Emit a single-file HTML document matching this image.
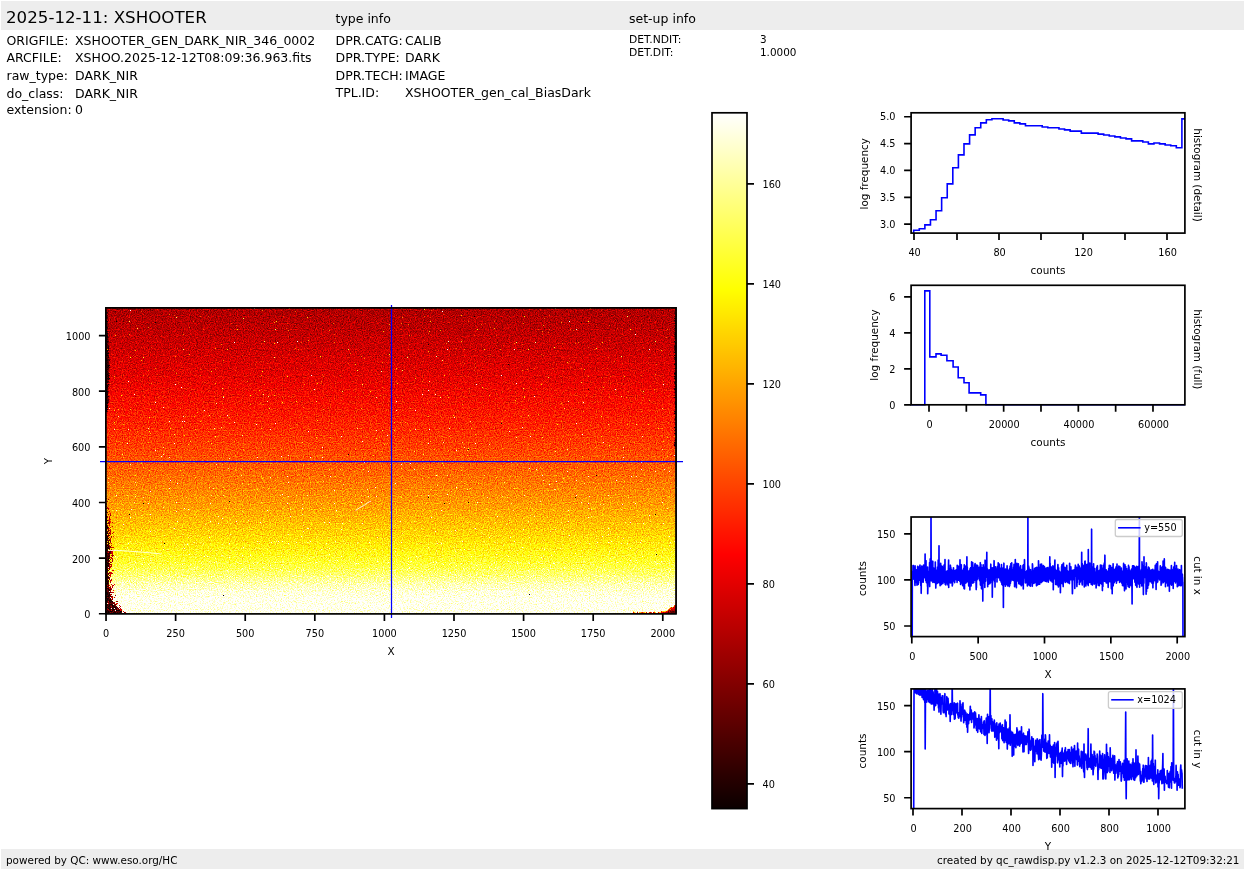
<!DOCTYPE html>
<html><head><meta charset="utf-8"><title>qc_rawdisp</title>
<style>html,body{margin:0;padding:0;background:#fff}svg{display:block;will-change:transform}</style></head>
<body>
<svg width="1245" height="870" viewBox="0 0 1245 870" font-family='"DejaVu Sans","Liberation Sans",sans-serif' fill="#000">
<defs>
<linearGradient id="gv" x1="0" y1="0" x2="0" y2="1"><stop offset="0.000" stop-color="rgb(62,62,62)"/><stop offset="0.025" stop-color="rgb(65,65,65)"/><stop offset="0.050" stop-color="rgb(67,67,67)"/><stop offset="0.075" stop-color="rgb(69,69,69)"/><stop offset="0.100" stop-color="rgb(72,72,72)"/><stop offset="0.125" stop-color="rgb(74,74,74)"/><stop offset="0.150" stop-color="rgb(77,77,77)"/><stop offset="0.175" stop-color="rgb(80,80,80)"/><stop offset="0.200" stop-color="rgb(82,82,82)"/><stop offset="0.225" stop-color="rgb(85,85,85)"/><stop offset="0.250" stop-color="rgb(88,88,88)"/><stop offset="0.275" stop-color="rgb(92,92,92)"/><stop offset="0.300" stop-color="rgb(95,95,95)"/><stop offset="0.325" stop-color="rgb(98,98,98)"/><stop offset="0.350" stop-color="rgb(102,102,102)"/><stop offset="0.375" stop-color="rgb(105,105,105)"/><stop offset="0.400" stop-color="rgb(109,109,109)"/><stop offset="0.425" stop-color="rgb(113,113,113)"/><stop offset="0.450" stop-color="rgb(117,117,117)"/><stop offset="0.475" stop-color="rgb(121,121,121)"/><stop offset="0.500" stop-color="rgb(126,126,126)"/><stop offset="0.525" stop-color="rgb(130,130,130)"/><stop offset="0.550" stop-color="rgb(135,135,135)"/><stop offset="0.575" stop-color="rgb(140,140,140)"/><stop offset="0.600" stop-color="rgb(145,145,145)"/><stop offset="0.625" stop-color="rgb(150,150,150)"/><stop offset="0.650" stop-color="rgb(155,155,155)"/><stop offset="0.675" stop-color="rgb(161,161,161)"/><stop offset="0.700" stop-color="rgb(167,167,167)"/><stop offset="0.725" stop-color="rgb(173,173,173)"/><stop offset="0.750" stop-color="rgb(179,179,179)"/><stop offset="0.775" stop-color="rgb(186,186,186)"/><stop offset="0.800" stop-color="rgb(193,193,193)"/><stop offset="0.825" stop-color="rgb(201,201,201)"/><stop offset="0.850" stop-color="rgb(210,210,210)"/><stop offset="0.875" stop-color="rgb(222,222,222)"/><stop offset="0.900" stop-color="rgb(236,236,236)"/><stop offset="0.925" stop-color="rgb(247,247,247)"/><stop offset="0.950" stop-color="rgb(254,254,254)"/><stop offset="0.975" stop-color="rgb(255,255,255)"/><stop offset="1.000" stop-color="rgb(255,255,255)"/></linearGradient>
<linearGradient id="cb" x1="0" y1="0" x2="0" y2="1"><stop offset="0.0000" stop-color="rgb(255,255,255)"/><stop offset="0.0159" stop-color="rgb(255,255,239)"/><stop offset="0.0317" stop-color="rgb(255,255,223)"/><stop offset="0.0476" stop-color="rgb(255,255,207)"/><stop offset="0.0635" stop-color="rgb(255,255,191)"/><stop offset="0.0794" stop-color="rgb(255,255,175)"/><stop offset="0.0952" stop-color="rgb(255,255,159)"/><stop offset="0.1111" stop-color="rgb(255,255,143)"/><stop offset="0.1270" stop-color="rgb(255,255,127)"/><stop offset="0.1429" stop-color="rgb(255,255,112)"/><stop offset="0.1587" stop-color="rgb(255,255,96)"/><stop offset="0.1746" stop-color="rgb(255,255,80)"/><stop offset="0.1905" stop-color="rgb(255,255,64)"/><stop offset="0.2063" stop-color="rgb(255,255,48)"/><stop offset="0.2222" stop-color="rgb(255,255,32)"/><stop offset="0.2381" stop-color="rgb(255,255,16)"/><stop offset="0.2540" stop-color="rgb(255,255,0)"/><stop offset="0.2698" stop-color="rgb(255,244,0)"/><stop offset="0.2857" stop-color="rgb(255,234,0)"/><stop offset="0.3016" stop-color="rgb(255,223,0)"/><stop offset="0.3175" stop-color="rgb(255,212,0)"/><stop offset="0.3333" stop-color="rgb(255,202,0)"/><stop offset="0.3492" stop-color="rgb(255,191,0)"/><stop offset="0.3651" stop-color="rgb(255,181,0)"/><stop offset="0.3810" stop-color="rgb(255,170,0)"/><stop offset="0.3968" stop-color="rgb(255,159,0)"/><stop offset="0.4127" stop-color="rgb(255,149,0)"/><stop offset="0.4286" stop-color="rgb(255,138,0)"/><stop offset="0.4444" stop-color="rgb(255,128,0)"/><stop offset="0.4603" stop-color="rgb(255,117,0)"/><stop offset="0.4762" stop-color="rgb(255,106,0)"/><stop offset="0.4921" stop-color="rgb(255,96,0)"/><stop offset="0.5079" stop-color="rgb(255,85,0)"/><stop offset="0.5238" stop-color="rgb(255,74,0)"/><stop offset="0.5397" stop-color="rgb(255,64,0)"/><stop offset="0.5556" stop-color="rgb(255,53,0)"/><stop offset="0.5714" stop-color="rgb(255,43,0)"/><stop offset="0.5873" stop-color="rgb(255,32,0)"/><stop offset="0.6032" stop-color="rgb(255,21,0)"/><stop offset="0.6190" stop-color="rgb(255,11,0)"/><stop offset="0.6349" stop-color="rgb(255,0,0)"/><stop offset="0.6508" stop-color="rgb(244,0,0)"/><stop offset="0.6667" stop-color="rgb(234,0,0)"/><stop offset="0.6825" stop-color="rgb(223,0,0)"/><stop offset="0.6984" stop-color="rgb(212,0,0)"/><stop offset="0.7143" stop-color="rgb(202,0,0)"/><stop offset="0.7302" stop-color="rgb(191,0,0)"/><stop offset="0.7460" stop-color="rgb(181,0,0)"/><stop offset="0.7619" stop-color="rgb(170,0,0)"/><stop offset="0.7778" stop-color="rgb(159,0,0)"/><stop offset="0.7937" stop-color="rgb(149,0,0)"/><stop offset="0.8095" stop-color="rgb(138,0,0)"/><stop offset="0.8254" stop-color="rgb(127,0,0)"/><stop offset="0.8413" stop-color="rgb(117,0,0)"/><stop offset="0.8571" stop-color="rgb(106,0,0)"/><stop offset="0.8730" stop-color="rgb(96,0,0)"/><stop offset="0.8889" stop-color="rgb(85,0,0)"/><stop offset="0.9048" stop-color="rgb(74,0,0)"/><stop offset="0.9206" stop-color="rgb(64,0,0)"/><stop offset="0.9365" stop-color="rgb(53,0,0)"/><stop offset="0.9524" stop-color="rgb(42,0,0)"/><stop offset="0.9683" stop-color="rgb(32,0,0)"/><stop offset="0.9841" stop-color="rgb(21,0,0)"/><stop offset="1.0000" stop-color="rgb(11,0,0)"/></linearGradient>
<filter id="hm" x="0" y="0" width="1" height="1" filterUnits="objectBoundingBox" color-interpolation-filters="sRGB">
<feTurbulence type="fractalNoise" baseFrequency="0.85" numOctaves="2" seed="5" result="n"/>
<feComponentTransfer in="n" result="t"><feFuncR type="linear" slope="0.42" intercept="0"/><feFuncG type="table" tableValues="0 0 0 0 0 0 0 0 0 0 0 0 0 0 0 0 0 0 0 0.05 0.25 0.6 1 1 1 1"/><feFuncB type="discrete" tableValues="1 1 1 1 1 1 1 1 1 1 1 1 1 1 1 1 1 1 1 1 1 1 0 0 0"/><feFuncA type="linear" slope="0" intercept="1"/></feComponentTransfer>
<feColorMatrix in="t" type="matrix" values="1 1 0 0 0  1 1 0 0 0  1 1 0 0 0  0 0 0 0 1" result="pos"/>
<feColorMatrix in="t" type="matrix" values="0 0 1 0 0  0 0 1 0 0  0 0 1 0 0  0 0 0 0 1" result="msk"/>
<feComposite in="SourceGraphic" in2="pos" operator="arithmetic" k1="0" k2="1" k3="1" k4="-0.21" result="v1"/>
<feComposite in="v1" in2="msk" operator="arithmetic" k1="1" k2="0" k3="0" k4="0" result="v"/>
<feComponentTransfer in="v"><feFuncR type="table" tableValues="0.0416 0.0833 0.1249 0.1666 0.2083 0.2499 0.2916 0.3333 0.3750 0.4166 0.4583 0.5000 0.5416 0.5833 0.6250 0.6666 0.7083 0.7500 0.7917 0.8333 0.8750 0.9167 0.9583 1.0000 1.0000 1.0000 1.0000 1.0000 1.0000 1.0000 1.0000 1.0000 1.0000 1.0000 1.0000 1.0000 1.0000 1.0000 1.0000 1.0000 1.0000 1.0000 1.0000 1.0000 1.0000 1.0000 1.0000 1.0000 1.0000 1.0000 1.0000 1.0000 1.0000 1.0000 1.0000 1.0000 1.0000 1.0000 1.0000 1.0000 1.0000 1.0000 1.0000 1.0000"/><feFuncG type="table" tableValues="0.0000 0.0000 0.0000 0.0000 0.0000 0.0000 0.0000 0.0000 0.0000 0.0000 0.0000 0.0000 0.0000 0.0000 0.0000 0.0000 0.0000 0.0000 0.0000 0.0000 0.0000 0.0000 0.0000 0.0000 0.0417 0.0833 0.1250 0.1667 0.2083 0.2500 0.2917 0.3333 0.3750 0.4167 0.4583 0.5000 0.5417 0.5833 0.6250 0.6667 0.7083 0.7500 0.7917 0.8333 0.8750 0.9167 0.9583 1.0000 1.0000 1.0000 1.0000 1.0000 1.0000 1.0000 1.0000 1.0000 1.0000 1.0000 1.0000 1.0000 1.0000 1.0000 1.0000 1.0000"/><feFuncB type="table" tableValues="0.0000 0.0000 0.0000 0.0000 0.0000 0.0000 0.0000 0.0000 0.0000 0.0000 0.0000 0.0000 0.0000 0.0000 0.0000 0.0000 0.0000 0.0000 0.0000 0.0000 0.0000 0.0000 0.0000 0.0000 0.0000 0.0000 0.0000 0.0000 0.0000 0.0000 0.0000 0.0000 0.0000 0.0000 0.0000 0.0000 0.0000 0.0000 0.0000 0.0000 0.0000 0.0000 0.0000 0.0000 0.0000 0.0000 0.0000 0.0000 0.0625 0.1250 0.1875 0.2500 0.3125 0.3750 0.4375 0.5000 0.5625 0.6250 0.6875 0.7500 0.8125 0.8750 0.9375 1.0000"/></feComponentTransfer>
</filter>
</defs>
<rect width="1245" height="870" fill="#fff"/>
<rect x="1" y="1" width="1243" height="29" fill="#ededed"/>
<rect x="1" y="849" width="1243" height="20" fill="#ededed"/>
<text x="6.0" y="22.6" font-size="16.67" text-anchor="start">2025-12-11: XSHOOTER</text>
<text x="335.5" y="22.8" font-size="12.5" text-anchor="start">type info</text>
<text x="629" y="22.8" font-size="12.5" text-anchor="start">set-up info</text>
<text x="6.5" y="44.8" font-size="12.5" text-anchor="start">ORIGFILE:</text>
<text x="75" y="44.8" font-size="12.5" text-anchor="start">XSHOOTER_GEN_DARK_NIR_346_0002</text>
<text x="6.5" y="61.5" font-size="12.5" text-anchor="start">ARCFILE:</text>
<text x="75" y="61.5" font-size="12.5" text-anchor="start">XSHOO.2025-12-12T08:09:36.963.fits</text>
<text x="6.5" y="79.9" font-size="12.5" text-anchor="start">raw_type:</text>
<text x="75" y="79.9" font-size="12.5" text-anchor="start">DARK_NIR</text>
<text x="6.5" y="97.5" font-size="12.5" text-anchor="start">do_class:</text>
<text x="75" y="97.5" font-size="12.5" text-anchor="start">DARK_NIR</text>
<text x="6.5" y="113.5" font-size="12.5" text-anchor="start">extension:</text>
<text x="75" y="113.5" font-size="12.5" text-anchor="start">0</text>
<text x="335.5" y="44.8" font-size="12.5" text-anchor="start">DPR.CATG:</text>
<text x="405" y="44.8" font-size="12.5" text-anchor="start">CALIB</text>
<text x="335.5" y="61.6" font-size="12.5" text-anchor="start">DPR.TYPE:</text>
<text x="405" y="61.6" font-size="12.5" text-anchor="start">DARK</text>
<text x="335.5" y="79.5" font-size="12.5" text-anchor="start">DPR.TECH:</text>
<text x="405" y="79.5" font-size="12.5" text-anchor="start">IMAGE</text>
<text x="335.5" y="96.8" font-size="12.5" text-anchor="start">TPL.ID:</text>
<text x="405" y="96.8" font-size="12.5" text-anchor="start">XSHOOTER_gen_cal_BiasDark</text>
<text x="629" y="42.8" font-size="10.42" text-anchor="start" textLength="52.3" lengthAdjust="spacingAndGlyphs">DET.NDIT:</text>
<text x="760" y="42.8" font-size="10.42" text-anchor="start">3</text>
<text x="629" y="55.9" font-size="10.42" text-anchor="start" textLength="44.4" lengthAdjust="spacingAndGlyphs">DET.DIT:</text>
<text x="760" y="55.9" font-size="10.42" text-anchor="start">1.0000</text>
<text x="6" y="864" font-size="10.42" text-anchor="start">powered by QC: www.eso.org/HC</text>
<text x="1239.5" y="864" font-size="10.42" text-anchor="end">created by qc_rawdisp.py v1.2.3 on 2025-12-12T09:32:21</text>
<clipPath id="ci"><rect x="105.9" y="307.9" width="570.1" height="306.0"/></clipPath>
<g filter="url(#hm)"><rect x="105.9" y="307.9" width="570.1" height="306.0" fill="url(#gv)"/><g clip-path="url(#ci)"><path d="M106 516h1v1h-1zM106 517h1v1h-1zM106 518h1v1h-1zM106 519h1v1h-1zM106 520h1v1h-1zM106 521h1v1h-1zM106 523h1v1h-1zM106 524h1v1h-1zM106 526h1v1h-1zM107 526h1v1h-1zM106 527h1v1h-1zM107 527h1v1h-1zM106 528h1v1h-1zM107 528h1v1h-1zM106 529h1v1h-1zM106 530h1v1h-1zM107 531h1v1h-1zM107 532h1v1h-1zM106 533h1v1h-1zM107 533h1v1h-1zM106 534h1v1h-1zM106 535h1v1h-1zM106 536h1v1h-1zM107 536h1v1h-1zM106 537h1v1h-1zM107 537h1v1h-1zM106 538h1v1h-1zM107 538h1v1h-1zM108 538h1v1h-1zM106 539h1v1h-1zM107 539h1v1h-1zM106 540h1v1h-1zM107 540h1v1h-1zM106 541h1v1h-1zM108 541h1v1h-1zM106 542h1v1h-1zM108 542h1v1h-1zM108 543h1v1h-1zM108 544h1v1h-1zM106 545h1v1h-1zM107 545h1v1h-1zM108 545h1v1h-1zM106 546h1v1h-1zM108 546h1v1h-1zM106 547h1v1h-1zM107 547h1v1h-1zM108 547h1v1h-1zM106 548h1v1h-1zM107 548h1v1h-1zM108 548h1v1h-1zM106 549h1v1h-1zM107 549h1v1h-1zM106 550h1v1h-1zM107 550h1v1h-1zM107 551h1v1h-1zM109 551h1v1h-1zM106 552h1v1h-1zM109 552h1v1h-1zM106 553h1v1h-1zM107 553h1v1h-1zM108 553h1v1h-1zM109 553h1v1h-1zM106 554h1v1h-1zM108 554h1v1h-1zM106 555h1v1h-1zM107 555h1v1h-1zM108 555h1v1h-1zM109 555h1v1h-1zM106 556h1v1h-1zM107 556h1v1h-1zM108 556h1v1h-1zM109 556h1v1h-1zM107 557h1v1h-1zM108 557h1v1h-1zM109 557h1v1h-1zM106 558h1v1h-1zM107 558h1v1h-1zM108 558h1v1h-1zM109 558h1v1h-1zM107 559h1v1h-1zM108 559h1v1h-1zM106 560h1v1h-1zM107 560h1v1h-1zM108 560h1v1h-1zM106 561h1v1h-1zM107 561h1v1h-1zM108 561h1v1h-1zM106 562h1v1h-1zM107 562h1v1h-1zM106 563h1v1h-1zM107 563h1v1h-1zM108 563h1v1h-1zM106 564h1v1h-1zM107 564h1v1h-1zM108 564h1v1h-1zM106 565h1v1h-1zM107 565h1v1h-1zM108 565h1v1h-1zM106 566h1v1h-1zM107 566h1v1h-1zM108 566h1v1h-1zM106 567h1v1h-1zM106 568h1v1h-1zM107 568h1v1h-1zM108 568h1v1h-1zM106 569h1v1h-1zM107 569h1v1h-1zM106 570h1v1h-1zM107 570h1v1h-1zM106 571h1v1h-1zM107 571h1v1h-1zM106 572h1v1h-1zM108 573h1v1h-1zM106 574h1v1h-1zM107 574h1v1h-1zM108 574h1v1h-1zM106 575h1v1h-1zM107 575h1v1h-1zM106 576h1v1h-1zM107 576h1v1h-1zM106 577h1v1h-1zM107 577h1v1h-1zM108 577h1v1h-1zM106 578h1v1h-1zM107 578h1v1h-1zM106 579h1v1h-1zM107 579h1v1h-1zM106 580h1v1h-1zM107 580h1v1h-1zM108 580h1v1h-1zM106 581h1v1h-1zM107 581h1v1h-1zM108 581h1v1h-1zM107 582h1v1h-1zM108 582h1v1h-1zM106 583h1v1h-1zM107 583h1v1h-1zM108 583h1v1h-1zM106 584h1v1h-1zM107 584h1v1h-1zM108 584h1v1h-1zM106 585h1v1h-1zM108 585h1v1h-1zM106 586h1v1h-1zM107 586h1v1h-1zM106 587h1v1h-1zM108 587h1v1h-1zM106 588h1v1h-1zM107 588h1v1h-1zM108 588h1v1h-1zM108 589h1v1h-1zM109 589h1v1h-1zM107 590h1v1h-1zM108 590h1v1h-1zM109 590h1v1h-1zM108 591h1v1h-1zM106 592h1v1h-1zM107 592h1v1h-1zM108 592h1v1h-1zM109 592h1v1h-1zM106 593h1v1h-1zM107 593h1v1h-1zM108 593h1v1h-1zM109 593h1v1h-1zM106 594h1v1h-1zM107 594h1v1h-1zM108 594h1v1h-1zM109 594h1v1h-1zM106 595h1v1h-1zM107 595h1v1h-1zM108 595h1v1h-1zM109 595h1v1h-1zM106 596h1v1h-1zM107 596h1v1h-1zM108 596h1v1h-1zM109 596h1v1h-1zM110 596h1v1h-1zM106 597h1v1h-1zM108 597h1v1h-1zM109 597h1v1h-1zM106 598h1v1h-1zM107 598h1v1h-1zM108 598h1v1h-1zM110 598h1v1h-1zM107 599h1v1h-1zM108 599h1v1h-1zM109 599h1v1h-1zM110 599h1v1h-1zM106 600h1v1h-1zM107 600h1v1h-1zM108 600h1v1h-1zM109 600h1v1h-1zM110 600h1v1h-1zM111 600h1v1h-1zM106 601h1v1h-1zM107 601h1v1h-1zM109 601h1v1h-1zM110 601h1v1h-1zM111 601h1v1h-1zM112 601h1v1h-1zM106 602h1v1h-1zM107 602h1v1h-1zM108 602h1v1h-1zM110 602h1v1h-1zM112 602h1v1h-1zM109 603h1v1h-1zM111 603h1v1h-1zM113 603h1v1h-1zM106 604h1v1h-1zM107 604h1v1h-1zM108 604h1v1h-1zM109 604h1v1h-1zM110 604h1v1h-1zM111 604h1v1h-1zM112 604h1v1h-1zM106 605h1v1h-1zM107 605h1v1h-1zM108 605h1v1h-1zM109 605h1v1h-1zM110 605h1v1h-1zM112 605h1v1h-1zM113 605h1v1h-1zM114 605h1v1h-1zM106 606h1v1h-1zM107 606h1v1h-1zM108 606h1v1h-1zM109 606h1v1h-1zM112 606h1v1h-1zM113 606h1v1h-1zM114 606h1v1h-1zM115 606h1v1h-1zM106 607h1v1h-1zM107 607h1v1h-1zM108 607h1v1h-1zM109 607h1v1h-1zM110 607h1v1h-1zM112 607h1v1h-1zM113 607h1v1h-1zM114 607h1v1h-1zM115 607h1v1h-1zM116 607h1v1h-1zM106 608h1v1h-1zM107 608h1v1h-1zM108 608h1v1h-1zM109 608h1v1h-1zM112 608h1v1h-1zM115 608h1v1h-1zM116 608h1v1h-1zM106 609h1v1h-1zM109 609h1v1h-1zM110 609h1v1h-1zM111 609h1v1h-1zM112 609h1v1h-1zM113 609h1v1h-1zM114 609h1v1h-1zM116 609h1v1h-1zM118 609h1v1h-1zM107 610h1v1h-1zM108 610h1v1h-1zM109 610h1v1h-1zM110 610h1v1h-1zM112 610h1v1h-1zM113 610h1v1h-1zM114 610h1v1h-1zM116 610h1v1h-1zM117 610h1v1h-1zM118 610h1v1h-1zM119 610h1v1h-1zM106 611h1v1h-1zM107 611h1v1h-1zM108 611h1v1h-1zM109 611h1v1h-1zM110 611h1v1h-1zM111 611h1v1h-1zM112 611h1v1h-1zM114 611h1v1h-1zM115 611h1v1h-1zM116 611h1v1h-1zM117 611h1v1h-1zM118 611h1v1h-1zM119 611h1v1h-1zM120 611h1v1h-1zM121 611h1v1h-1zM106 612h1v1h-1zM107 612h1v1h-1zM108 612h1v1h-1zM109 612h1v1h-1zM111 612h1v1h-1zM113 612h1v1h-1zM114 612h1v1h-1zM115 612h1v1h-1zM117 612h1v1h-1zM118 612h1v1h-1zM119 612h1v1h-1zM120 612h1v1h-1zM121 612h1v1h-1zM106 613h1v1h-1zM107 613h1v1h-1zM108 613h1v1h-1zM110 613h1v1h-1zM111 613h1v1h-1zM112 613h1v1h-1zM113 613h1v1h-1zM114 613h1v1h-1zM115 613h1v1h-1zM116 613h1v1h-1zM117 613h1v1h-1zM118 613h1v1h-1zM120 613h1v1h-1zM121 613h1v1h-1zM122 613h1v1h-1zM123 613h1v1h-1z" fill="rgb(13,13,13)"/><path d="M106 506h1v1h-1zM106 508h1v1h-1zM106 511h1v1h-1zM106 512h1v1h-1zM107 512h1v1h-1zM106 515h1v1h-1zM107 520h1v1h-1zM106 522h1v1h-1zM108 522h1v1h-1zM107 523h1v1h-1zM108 523h1v1h-1zM106 525h1v1h-1zM107 525h1v1h-1zM108 527h1v1h-1zM108 530h1v1h-1zM106 531h1v1h-1zM108 531h1v1h-1zM106 532h1v1h-1zM108 533h1v1h-1zM109 533h1v1h-1zM108 534h1v1h-1zM108 535h1v1h-1zM109 535h1v1h-1zM108 536h1v1h-1zM109 537h1v1h-1zM109 539h1v1h-1zM108 540h1v1h-1zM109 540h1v1h-1zM107 542h1v1h-1zM109 543h1v1h-1zM107 544h1v1h-1zM107 546h1v1h-1zM109 546h1v1h-1zM110 546h1v1h-1zM109 547h1v1h-1zM110 547h1v1h-1zM109 548h1v1h-1zM109 549h1v1h-1zM108 551h1v1h-1zM110 551h1v1h-1zM107 552h1v1h-1zM110 552h1v1h-1zM110 553h1v1h-1zM107 554h1v1h-1zM109 554h1v1h-1zM106 557h1v1h-1zM106 559h1v1h-1zM110 559h1v1h-1zM109 560h1v1h-1zM109 561h1v1h-1zM108 562h1v1h-1zM110 562h1v1h-1zM109 563h1v1h-1zM109 564h1v1h-1zM110 564h1v1h-1zM109 566h1v1h-1zM107 567h1v1h-1zM109 567h1v1h-1zM109 568h1v1h-1zM109 569h1v1h-1zM108 570h1v1h-1zM107 572h1v1h-1zM109 572h1v1h-1zM106 573h1v1h-1zM107 573h1v1h-1zM109 575h1v1h-1zM108 576h1v1h-1zM108 578h1v1h-1zM109 578h1v1h-1zM109 579h1v1h-1zM108 586h1v1h-1zM109 587h1v1h-1zM110 587h1v1h-1zM106 589h1v1h-1zM107 589h1v1h-1zM110 589h1v1h-1zM106 590h1v1h-1zM110 590h1v1h-1zM106 591h1v1h-1zM107 591h1v1h-1zM110 592h1v1h-1zM111 592h1v1h-1zM110 594h1v1h-1zM111 594h1v1h-1zM111 596h1v1h-1zM107 597h1v1h-1zM109 598h1v1h-1zM112 598h1v1h-1zM112 599h1v1h-1zM109 602h1v1h-1zM111 602h1v1h-1zM114 602h1v1h-1zM106 603h1v1h-1zM110 603h1v1h-1zM112 603h1v1h-1zM114 603h1v1h-1zM115 604h1v1h-1zM111 605h1v1h-1zM115 605h1v1h-1zM110 606h1v1h-1zM116 606h1v1h-1zM117 607h1v1h-1zM110 608h1v1h-1zM113 608h1v1h-1zM117 608h1v1h-1zM118 608h1v1h-1zM107 609h1v1h-1zM117 609h1v1h-1zM119 609h1v1h-1zM106 610h1v1h-1zM113 611h1v1h-1zM110 612h1v1h-1zM112 612h1v1h-1zM116 612h1v1h-1zM124 612h1v1h-1zM119 613h1v1h-1z" fill="rgb(42,42,42)"/><path d="M106 498h1v1h-1zM108 499h1v1h-1zM107 501h1v1h-1zM106 503h1v1h-1zM106 504h1v1h-1zM107 507h1v1h-1zM107 508h1v1h-1zM108 508h1v1h-1zM108 509h1v1h-1zM109 511h1v1h-1zM110 513h1v1h-1zM106 514h1v1h-1zM108 514h1v1h-1zM110 514h1v1h-1zM110 515h1v1h-1zM107 516h1v1h-1zM109 516h1v1h-1zM107 517h1v1h-1zM109 517h1v1h-1zM109 518h1v1h-1zM109 519h1v1h-1zM110 519h1v1h-1zM108 520h1v1h-1zM109 520h1v1h-1zM109 521h1v1h-1zM110 521h1v1h-1zM109 522h1v1h-1zM110 522h1v1h-1zM112 522h1v1h-1zM109 523h1v1h-1zM109 524h1v1h-1zM109 525h1v1h-1zM112 526h1v1h-1zM110 527h1v1h-1zM108 528h1v1h-1zM109 528h1v1h-1zM108 529h1v1h-1zM110 529h1v1h-1zM109 530h1v1h-1zM110 530h1v1h-1zM110 531h1v1h-1zM109 532h1v1h-1zM110 532h1v1h-1zM113 532h1v1h-1zM110 533h1v1h-1zM112 533h1v1h-1zM110 534h1v1h-1zM107 535h1v1h-1zM111 536h1v1h-1zM113 536h1v1h-1zM111 537h1v1h-1zM110 538h1v1h-1zM110 539h1v1h-1zM110 540h1v1h-1zM110 541h1v1h-1zM110 542h1v1h-1zM106 543h1v1h-1zM111 543h1v1h-1zM106 544h1v1h-1zM109 545h1v1h-1zM111 545h1v1h-1zM111 547h1v1h-1zM112 547h1v1h-1zM113 547h1v1h-1zM111 549h1v1h-1zM110 550h1v1h-1zM113 550h1v1h-1zM106 551h1v1h-1zM111 551h1v1h-1zM112 551h1v1h-1zM108 552h1v1h-1zM111 552h1v1h-1zM112 552h1v1h-1zM111 553h1v1h-1zM112 553h1v1h-1zM112 554h1v1h-1zM111 555h1v1h-1zM112 555h1v1h-1zM113 555h1v1h-1zM112 556h1v1h-1zM110 557h1v1h-1zM111 557h1v1h-1zM111 558h1v1h-1zM112 558h1v1h-1zM112 559h1v1h-1zM112 560h1v1h-1zM110 561h1v1h-1zM112 561h1v1h-1zM111 562h1v1h-1zM111 564h1v1h-1zM109 565h1v1h-1zM111 565h1v1h-1zM110 566h1v1h-1zM111 566h1v1h-1zM110 567h1v1h-1zM112 570h1v1h-1zM113 570h1v1h-1zM110 572h1v1h-1zM111 572h1v1h-1zM109 573h1v1h-1zM110 573h1v1h-1zM111 573h1v1h-1zM112 573h1v1h-1zM110 574h1v1h-1zM110 575h1v1h-1zM110 576h1v1h-1zM109 577h1v1h-1zM111 579h1v1h-1zM110 580h1v1h-1zM111 580h1v1h-1zM110 581h1v1h-1zM106 582h1v1h-1zM110 582h1v1h-1zM111 584h1v1h-1zM114 584h1v1h-1zM107 585h1v1h-1zM109 585h1v1h-1zM112 585h1v1h-1zM113 585h1v1h-1zM110 586h1v1h-1zM112 586h1v1h-1zM107 587h1v1h-1zM112 587h1v1h-1zM109 588h1v1h-1zM110 588h1v1h-1zM111 588h1v1h-1zM111 589h1v1h-1zM113 590h1v1h-1zM110 591h1v1h-1zM112 592h1v1h-1zM113 592h1v1h-1zM110 595h1v1h-1zM115 595h1v1h-1zM112 596h1v1h-1zM111 597h1v1h-1zM112 597h1v1h-1zM114 597h1v1h-1zM106 599h1v1h-1zM111 599h1v1h-1zM108 601h1v1h-1zM116 601h1v1h-1zM117 601h1v1h-1zM113 602h1v1h-1zM108 603h1v1h-1zM116 603h1v1h-1zM117 603h1v1h-1zM114 604h1v1h-1zM116 604h1v1h-1zM119 605h1v1h-1zM111 606h1v1h-1zM120 606h1v1h-1zM111 607h1v1h-1zM119 607h1v1h-1zM120 608h1v1h-1zM108 609h1v1h-1zM115 609h1v1h-1zM120 609h1v1h-1zM121 609h1v1h-1zM111 610h1v1h-1zM120 610h1v1h-1zM121 610h1v1h-1zM123 611h1v1h-1zM125 612h1v1h-1zM109 613h1v1h-1zM125 613h1v1h-1zM126 613h1v1h-1z" fill="rgb(73,73,73)"/><path d="M105.9 312h2.1v1h-2.1zM105.9 313h1.6v1h-1.6zM105.9 315h2.2v1h-2.2zM105.9 316h1.7v1h-1.7zM105.9 317h2.0v1h-2.0zM105.9 318h1.5v1h-1.5zM105.9 320h1.3v1h-1.3zM105.9 321h2.2v1h-2.2zM105.9 322h1.4v1h-1.4zM105.9 323h1.7v1h-1.7zM105.9 324h2.2v1h-2.2zM105.9 325h1.7v1h-1.7zM105.9 326h2.0v1h-2.0zM105.9 327h1.9v1h-1.9zM105.9 328h2.5v1h-2.5zM105.9 329h1.9v1h-1.9zM105.9 330h1.8v1h-1.8zM105.9 331h2.9v1h-2.9zM105.9 332h1.6v1h-1.6zM105.9 333h2.4v1h-2.4zM105.9 334h2.4v1h-2.4zM105.9 335h2.0v1h-2.0zM105.9 336h2.7v1h-2.7zM105.9 337h2.7v1h-2.7zM105.9 338h2.3v1h-2.3zM105.9 339h2.1v1h-2.1zM105.9 340h1.8v1h-1.8zM105.9 341h3.0v1h-3.0zM105.9 342h3.3v1h-3.3zM105.9 343h2.2v1h-2.2zM105.9 344h2.3v1h-2.3zM105.9 345h2.9v1h-2.9zM105.9 346h3.1v1h-3.1zM105.9 347h3.3v1h-3.3zM105.9 348h3.2v1h-3.2zM105.9 349h3.1v1h-3.1zM105.9 350h3.1v1h-3.1zM105.9 351h2.1v1h-2.1zM105.9 352h2.9v1h-2.9zM105.9 353h3.3v1h-3.3zM105.9 354h2.7v1h-2.7zM105.9 355h2.7v1h-2.7zM105.9 356h3.0v1h-3.0zM105.9 357h3.3v1h-3.3zM105.9 358h2.4v1h-2.4zM105.9 359h3.7v1h-3.7zM105.9 360h3.6v1h-3.6zM105.9 361h2.9v1h-2.9zM105.9 362h3.0v1h-3.0zM105.9 363h2.9v1h-2.9zM105.9 364h3.3v1h-3.3zM105.9 365h4.2v1h-4.2zM105.9 366h3.3v1h-3.3zM105.9 367h4.2v1h-4.2zM105.9 368h3.0v1h-3.0zM105.9 369h3.1v1h-3.1zM105.9 370h3.5v1h-3.5zM105.9 371h2.9v1h-2.9zM105.9 372h2.9v1h-2.9zM105.9 373h3.8v1h-3.8zM105.9 374h3.2v1h-3.2zM105.9 375h3.8v1h-3.8zM105.9 376h3.0v1h-3.0zM105.9 377h3.1v1h-3.1zM105.9 378h4.0v1h-4.0zM105.9 379h3.5v1h-3.5zM105.9 380h2.7v1h-2.7zM105.9 381h3.1v1h-3.1zM105.9 382h2.6v1h-2.6zM105.9 383h2.5v1h-2.5zM105.9 384h3.2v1h-3.2zM105.9 385h2.5v1h-2.5zM105.9 386h2.6v1h-2.6zM105.9 387h2.3v1h-2.3zM105.9 388h2.3v1h-2.3zM105.9 389h2.8v1h-2.8zM105.9 390h2.3v1h-2.3zM105.9 391h2.5v1h-2.5zM105.9 392h2.7v1h-2.7zM105.9 393h2.2v1h-2.2zM105.9 394h2.1v1h-2.1zM105.9 395h2.1v1h-2.1zM105.9 396h3.3v1h-3.3zM105.9 397h2.3v1h-2.3zM105.9 398h2.4v1h-2.4zM105.9 399h2.9v1h-2.9zM105.9 400h2.9v1h-2.9zM105.9 401h2.7v1h-2.7zM105.9 402h3.0v1h-3.0zM105.9 403h2.4v1h-2.4zM105.9 404h1.7v1h-1.7zM105.9 405h2.4v1h-2.4zM105.9 406h2.1v1h-2.1zM105.9 407h2.7v1h-2.7zM105.9 408h1.7v1h-1.7zM105.9 409h2.4v1h-2.4zM105.9 410h1.3v1h-1.3zM105.9 411h1.9v1h-1.9z" fill="rgb(16,16,16)"/><path d="M676.0 318h-1.9v1h1.9zM676.0 320h-2.0v1h2.0zM676.0 321h-1.4v1h1.4zM676.0 322h-1.4v1h1.4zM676.0 323h-1.7v1h1.7zM676.0 325h-1.6v1h1.6zM676.0 326h-1.3v1h1.3zM676.0 327h-1.2v1h1.2zM676.0 328h-1.6v1h1.6zM676.0 330h-1.6v1h1.6zM676.0 332h-1.8v1h1.8zM676.0 333h-1.8v1h1.8zM676.0 334h-1.9v1h1.9zM676.0 335h-1.5v1h1.5zM676.0 336h-1.4v1h1.4zM676.0 337h-1.6v1h1.6zM676.0 338h-1.4v1h1.4zM676.0 341h-1.8v1h1.8zM676.0 342h-1.7v1h1.7zM676.0 343h-1.4v1h1.4zM676.0 345h-1.5v1h1.5zM676.0 346h-2.0v1h2.0zM676.0 347h-1.8v1h1.8zM676.0 348h-1.2v1h1.2zM676.0 349h-1.9v1h1.9zM676.0 350h-1.8v1h1.8zM676.0 351h-1.3v1h1.3zM676.0 352h-2.1v1h2.1zM676.0 355h-2.0v1h2.0zM676.0 357h-1.7v1h1.7zM676.0 358h-1.7v1h1.7zM676.0 359h-1.7v1h1.7zM676.0 360h-1.1v1h1.1zM676.0 363h-1.5v1h1.5zM676.0 364h-2.1v1h2.1zM676.0 368h-1.8v1h1.8zM676.0 372h-1.5v1h1.5zM676.0 373h-1.9v1h1.9zM676.0 374h-1.6v1h1.6zM676.0 376h-2.0v1h2.0zM676.0 377h-1.4v1h1.4zM676.0 378h-1.9v1h1.9zM676.0 379h-1.3v1h1.3zM676.0 381h-1.3v1h1.3zM676.0 382h-1.7v1h1.7zM676.0 383h-1.8v1h1.8zM676.0 384h-1.2v1h1.2zM676.0 386h-1.7v1h1.7zM676.0 388h-1.8v1h1.8zM676.0 389h-1.9v1h1.9zM676.0 390h-1.5v1h1.5zM676.0 391h-1.1v1h1.1zM676.0 392h-1.6v1h1.6zM676.0 395h-1.2v1h1.2zM676.0 397h-1.8v1h1.8zM676.0 401h-1.1v1h1.1zM676.0 402h-1.6v1h1.6zM676.0 403h-1.4v1h1.4zM676.0 404h-1.1v1h1.1zM676.0 406h-1.2v1h1.2zM676.0 407h-1.3v1h1.3zM676.0 411h-1.9v1h1.9zM676.0 412h-1.1v1h1.1zM676.0 413h-2.0v1h2.0zM676.0 417h-1.1v1h1.1zM676.0 418h-1.4v1h1.4zM676.0 419h-1.4v1h1.4zM676.0 422h-1.3v1h1.3zM676.0 424h-1.2v1h1.2zM676.0 427h-2.0v1h2.0zM676.0 429h-1.0v1h1.0zM676.0 430h-1.9v1h1.9zM676.0 433h-1.7v1h1.7zM676.0 434h-1.2v1h1.2zM676.0 439h-1.1v1h1.1zM676.0 440h-1.6v1h1.6zM676.0 442h-2.1v1h2.1zM676.0 443h-1.6v1h1.6zM676.0 444h-2.1v1h2.1zM676.0 445h-2.1v1h2.1zM676.0 446h-1.3v1h1.3z" fill="rgb(16,16,16)"/><path d="M632 613.9v-0.4h1v0.4zM633 613.9v-2.1h1v2.1zM634 613.9v-1.4h1v1.4zM635 613.9v-1.1h1v1.1zM636 613.9v-0.6h1v0.6zM637 613.9v-2.1h1v2.1zM638 613.9v-0.4h1v0.4zM639 613.9v-1.5h1v1.5zM640 613.9v-1.4h1v1.4zM641 613.9v-1.7h1v1.7zM642 613.9v-1.7h1v1.7zM643 613.9v-1.6h1v1.6zM644 613.9v-1.4h1v1.4zM645 613.9v-1.1h1v1.1zM646 613.9v-1.8h1v1.8zM647 613.9v-0.6h1v0.6zM648 613.9v-0.8h1v0.8zM649 613.9v-1.8h1v1.8zM650 613.9v-2.0h1v2.0zM651 613.9v-1.6h1v1.6zM652 613.9v-0.4h1v0.4zM653 613.9v-1.9h1v1.9zM654 613.9v-2.1h1v2.1zM655 613.9v-1.2h1v1.2zM656 613.9v-1.0h1v1.0zM657 613.9v-1.0h1v1.0zM658 613.9v-1.9h1v1.9zM659 613.9v-1.4h1v1.4zM660 613.9v-1.5h1v1.5zM661 613.9v-2.6h1v2.6zM662 613.9v-2.2h1v2.2zM663 613.9v-2.5h1v2.5zM664 613.9v-2.5h1v2.5zM665 613.9v-2.5h1v2.5zM666 613.9v-3.0h1v3.0zM667 613.9v-3.4h1v3.4zM668 613.9v-4.7h1v4.7zM669 613.9v-5.3h1v5.3zM670 613.9v-6.1h1v6.1zM671 613.9v-6.8h1v6.8zM672 613.9v-6.5h1v6.5zM673 613.9v-7.1h1v7.1zM674 613.9v-8.7h1v8.7zM675 613.9v-9.1h1v9.1zM676 613.9v-10.8h1v10.8z" fill="rgb(82,82,82)"/><path d="M665 613.9v-1.3h1v1.3zM666 613.9v-1.5h1v1.5zM667 613.9v-1.7h1v1.7zM668 613.9v-2.3h1v2.3zM669 613.9v-2.7h1v2.7zM670 613.9v-3.1h1v3.1zM671 613.9v-3.4h1v3.4zM672 613.9v-3.3h1v3.3zM673 613.9v-3.6h1v3.6zM674 613.9v-4.4h1v4.4zM675 613.9v-4.6h1v4.6zM676 613.9v-5.4h1v5.4z" fill="rgb(37,37,37)"/></g></g>
<path d="M108 550.4L120 550.6L135 551.6L150 552.8L161 554M355.5 510.5L360 507.5L364 505.5L367 503.2L371 501" stroke="#fff" stroke-width="0.9" stroke-opacity="0.9" fill="none"/>
<path d="M100 461.5H683M391.5 305V618" stroke="#00f" stroke-width="1.25" fill="none"/>
<rect x="105.9" y="307.9" width="570.1" height="306.0" fill="none" stroke="#000" stroke-width="1.7"/>
<path d="M106.04 613.9v7M175.63 613.9v7M245.22 613.9v7M314.82 613.9v7M384.41 613.9v7M454.00 613.9v7M523.59 613.9v7M593.19 613.9v7M662.78 613.9v7M105.9 613.76h-7M105.9 558.12h-7M105.9 502.49h-7M105.9 446.85h-7M105.9 391.22h-7M105.9 335.58h-7" stroke="#000" stroke-width="1.7" fill="none"/>
<text x="106.04" y="636.5" font-size="9.72" text-anchor="middle">0</text>
<text x="175.63" y="636.5" font-size="9.72" text-anchor="middle">250</text>
<text x="245.22" y="636.5" font-size="9.72" text-anchor="middle">500</text>
<text x="314.82" y="636.5" font-size="9.72" text-anchor="middle">750</text>
<text x="384.41" y="636.5" font-size="9.72" text-anchor="middle">1000</text>
<text x="454.00" y="636.5" font-size="9.72" text-anchor="middle">1250</text>
<text x="523.59" y="636.5" font-size="9.72" text-anchor="middle">1500</text>
<text x="593.19" y="636.5" font-size="9.72" text-anchor="middle">1750</text>
<text x="662.78" y="636.5" font-size="9.72" text-anchor="middle">2000</text>
<text x="90.5" y="618.16" font-size="9.72" text-anchor="end">0</text>
<text x="90.5" y="562.52" font-size="9.72" text-anchor="end">200</text>
<text x="90.5" y="506.89" font-size="9.72" text-anchor="end">400</text>
<text x="90.5" y="451.25" font-size="9.72" text-anchor="end">600</text>
<text x="90.5" y="395.62" font-size="9.72" text-anchor="end">800</text>
<text x="90.5" y="339.98" font-size="9.72" text-anchor="end">1000</text>
<text x="391" y="655" font-size="10.42" text-anchor="middle">X</text>
<text x="52.2" y="461" font-size="10.42" text-anchor="middle" transform="rotate(-90 52.2 461)">Y</text>
<rect x="712" y="112.8" width="35" height="695.8000000000001" fill="url(#cb)" stroke="#000" stroke-width="1.7"/>
<text x="762.5" y="788.10" font-size="9.72" text-anchor="start">40</text>
<text x="762.5" y="688.10" font-size="9.72" text-anchor="start">60</text>
<text x="762.5" y="588.10" font-size="9.72" text-anchor="start">80</text>
<text x="762.5" y="488.10" font-size="9.72" text-anchor="start">100</text>
<text x="762.5" y="388.10" font-size="9.72" text-anchor="start">120</text>
<text x="762.5" y="288.10" font-size="9.72" text-anchor="start">140</text>
<text x="762.5" y="188.10" font-size="9.72" text-anchor="start">160</text>
<path d="M747 783.80h7M747 683.80h7M747 583.80h7M747 483.80h7M747 383.80h7M747 283.80h7M747 183.80h7" stroke="#000" stroke-width="1.7" fill="none"/>
<path d="M913.70 233.1V230.30H919.29V228.80H924.88V224.90H930.46V219.80H936.05V210.80H941.64V197.70H947.23V183.90H952.81V167.80H958.40V154.90H963.99V143.90H969.58V134.90H975.16V127.70H980.75V122.90H986.34V119.70H991.93V118.80H997.51V118.80H1003.10V120.05H1008.69V120.85H1014.28V122.90H1019.86V123.90H1025.45V125.80H1031.04V125.80H1036.62V125.80H1042.21V127.00H1047.80V127.80H1053.39V127.80H1058.98V129.00H1064.56V129.85H1070.15V131.10H1075.74V131.10H1081.33V133.10H1086.91V133.10H1092.50V133.10H1098.09V134.10H1103.68V135.07H1109.26V135.95H1114.85V136.90H1120.44V137.96H1126.03V138.90H1131.61V140.90H1137.20V140.90H1142.79V141.98H1148.38V143.90H1153.96V143.00H1159.55V143.90H1165.14V144.95H1170.73V145.75H1176.31V147.76H1181.90V118.85H1184.90" stroke="#00f" stroke-width="1.6" fill="none" stroke-linejoin="miter"/>
<rect x="911.1" y="112.8" width="273.80000000000007" height="120.3" fill="none" stroke="#000" stroke-width="1.7"/>
<text x="914.60" y="255.8" font-size="9.72" text-anchor="middle">40</text>
<text x="999.60" y="255.8" font-size="9.72" text-anchor="middle">80</text>
<text x="1083.60" y="255.8" font-size="9.72" text-anchor="middle">120</text>
<text x="1167.60" y="255.8" font-size="9.72" text-anchor="middle">160</text>
<text x="895.5" y="120.45" font-size="9.72" text-anchor="end">5.0</text>
<text x="895.5" y="147.30" font-size="9.72" text-anchor="end">4.5</text>
<text x="895.5" y="174.15" font-size="9.72" text-anchor="end">4.0</text>
<text x="895.5" y="201.00" font-size="9.72" text-anchor="end">3.5</text>
<text x="895.5" y="227.85" font-size="9.72" text-anchor="end">3.0</text>
<path d="M914.00 233.1v7M957.00 233.1v7M999.00 233.1v7M1041.00 233.1v7M1083.00 233.1v7M1125.00 233.1v7M1167.00 233.1v7M911.1 116.75h-7M911.1 143.60h-7M911.1 170.45h-7M911.1 197.30h-7M911.1 224.15h-7" stroke="#000" stroke-width="1.7" fill="none"/>
<text x="1048" y="273.5" font-size="10.42" text-anchor="middle">counts</text>
<text x="868" y="173.8" font-size="10.42" text-anchor="middle" transform="rotate(-90 868 173.8)">log frequency</text>
<text x="1194" y="175" font-size="10.42" text-anchor="middle" transform="rotate(90 1194 175)">histogram (detail)</text>
<path d="M911.10 404.70L924.80 404.70L924.80 290.90L929.80 290.90L929.80 356.90L936.00 356.90L936.00 353.90L941.10 353.90L941.10 355.20L946.90 355.20L946.90 360.70L953.10 360.70L953.10 367.00L958.20 367.00L958.20 377.80L964.00 377.80L964.00 382.80L969.10 382.80L969.10 392.90L980.70 392.90L980.70 394.90L985.90 394.90L985.90 404.70L1184.90 404.70" stroke="#00f" stroke-width="1.6" fill="none"/>
<rect x="911.1" y="285.3" width="273.80000000000007" height="119.5" fill="none" stroke="#000" stroke-width="1.7"/>
<text x="929.60" y="428.2" font-size="9.72" text-anchor="middle">0</text>
<text x="1004.26" y="428.2" font-size="9.72" text-anchor="middle">20000</text>
<text x="1078.92" y="428.2" font-size="9.72" text-anchor="middle">40000</text>
<text x="1153.58" y="428.2" font-size="9.72" text-anchor="middle">60000</text>
<text x="895.5" y="408.50" font-size="9.72" text-anchor="end">0</text>
<text x="895.5" y="372.50" font-size="9.72" text-anchor="end">2</text>
<text x="895.5" y="336.50" font-size="9.72" text-anchor="end">4</text>
<text x="895.5" y="300.50" font-size="9.72" text-anchor="end">6</text>
<path d="M929.00 404.8v7M966.33 404.8v7M1003.66 404.8v7M1040.99 404.8v7M1078.32 404.8v7M1115.65 404.8v7M1152.98 404.8v7M911.1 404.80h-7M911.1 368.80h-7M911.1 332.80h-7M911.1 296.80h-7" stroke="#000" stroke-width="1.7" fill="none"/>
<text x="1048" y="445.5" font-size="10.42" text-anchor="middle">counts</text>
<text x="878" y="345" font-size="10.42" text-anchor="middle" transform="rotate(-90 878 345)">log frequency</text>
<text x="1194" y="349.3" font-size="10.42" text-anchor="middle" transform="rotate(90 1194 349.3)">histogram (full)</text>
<clipPath id="c3"><rect x="911.1" y="517.0" width="273.80000000000007" height="119.60000000000002"/></clipPath>
<path d="M911.8 641.6L911.9 641.6L912.1 641.6L912.2 641.6L912.3 582.7L912.5 573.8L912.6 571.6L912.7 573.6L912.9 576.3L913.0 565.6L913.1 575.2L913.3 577.6L913.4 565.6L913.5 573.7L913.7 573.4L913.8 569.9L913.9 579.2L914.1 576.2L914.2 576.3L914.3 570.8L914.5 567.7L914.6 576.2L914.7 574.1L914.9 584.5L915.0 585.5L915.1 565.9L915.3 576.4L915.4 581.0L915.5 577.2L915.6 579.3L915.8 582.4L915.9 577.6L916.0 579.5L916.2 577.8L916.3 575.3L916.4 573.8L916.6 570.6L916.7 573.0L916.8 569.6L917.0 585.2L917.1 580.9L917.2 579.3L917.4 570.5L917.5 580.1L917.6 566.4L917.8 574.8L917.9 580.6L918.0 579.2L918.2 584.5L918.3 572.2L918.4 579.0L918.6 567.4L918.7 569.8L918.8 580.0L919.0 571.9L919.1 580.1L919.2 579.6L919.4 576.4L919.5 567.5L919.6 566.2L919.8 575.8L919.9 580.6L920.0 565.1L920.2 577.1L920.3 573.8L920.4 583.1L920.6 580.5L920.7 567.8L920.8 585.7L921.0 576.0L921.1 577.3L921.2 593.3L921.4 567.6L921.5 578.2L921.6 572.1L921.8 566.0L921.9 572.3L922.0 582.1L922.2 569.1L922.3 567.8L922.4 568.8L922.5 578.5L922.7 573.4L922.8 581.6L922.9 574.8L923.1 579.1L923.2 582.2L923.3 566.3L923.5 576.5L923.6 565.0L923.7 576.1L923.9 577.6L924.0 576.5L924.1 572.3L924.3 572.4L924.4 569.0L924.5 569.6L924.7 567.9L924.8 573.3L924.9 576.9L925.1 554.1L925.2 576.0L925.3 573.0L925.5 579.0L925.6 576.2L925.7 580.6L925.9 560.5L926.0 561.0L926.1 571.5L926.3 577.3L926.4 582.6L926.5 576.4L926.7 580.9L926.8 574.5L926.9 580.9L927.1 572.4L927.2 581.1L927.3 579.2L927.5 586.4L927.6 567.1L927.7 593.7L927.9 586.1L928.0 583.6L928.1 571.4L928.3 581.9L928.4 580.1L928.5 573.3L928.7 581.0L928.8 577.5L928.9 574.2L929.1 573.1L929.2 573.3L929.3 573.5L929.4 575.4L929.6 562.6L929.7 586.6L929.8 569.4L930.0 578.3L930.1 575.1L930.2 558.9L930.4 566.5L930.5 577.9L930.6 574.2L930.8 578.9L930.9 575.2L931.0 512.0L931.2 574.9L931.3 581.0L931.4 579.8L931.6 575.9L931.7 576.8L931.8 570.2L932.0 580.6L932.1 574.1L932.2 580.3L932.4 575.7L932.5 579.6L932.6 576.5L932.8 561.2L932.9 582.5L933.0 571.9L933.2 579.2L933.3 574.5L933.4 579.6L933.6 572.8L933.7 568.4L933.8 572.0L934.0 575.1L934.1 568.3L934.2 578.5L934.4 582.3L934.5 578.0L934.6 576.3L934.8 576.1L934.9 579.4L935.0 572.7L935.2 580.0L935.3 562.0L935.4 572.9L935.6 583.8L935.7 576.4L935.8 588.1L936.0 570.8L936.1 581.1L936.2 584.3L936.3 576.5L936.5 584.0L936.6 573.4L936.7 578.7L936.9 570.1L937.0 572.3L937.1 580.1L937.3 573.0L937.4 571.6L937.5 567.0L937.7 583.1L937.8 568.0L937.9 568.8L938.1 574.4L938.2 560.0L938.3 575.7L938.5 575.6L938.6 581.9L938.7 572.8L938.9 570.5L939.0 545.8L939.1 582.6L939.3 565.0L939.4 579.0L939.5 566.6L939.7 573.1L939.8 571.9L939.9 575.0L940.1 585.7L940.2 575.9L940.3 571.8L940.5 571.5L940.6 579.0L940.7 563.4L940.9 573.4L941.0 576.1L941.1 580.8L941.3 584.6L941.4 579.5L941.5 574.3L941.7 576.2L941.8 572.9L941.9 566.1L942.1 570.6L942.2 583.2L942.3 566.6L942.5 568.9L942.6 576.6L942.7 578.3L942.9 583.6L943.0 576.3L943.1 574.3L943.2 578.6L943.4 576.0L943.5 576.8L943.6 575.8L943.8 578.1L943.9 575.5L944.0 565.2L944.2 568.0L944.3 574.9L944.4 581.6L944.6 582.1L944.7 579.0L944.8 572.9L945.0 559.6L945.1 580.5L945.2 584.3L945.4 580.1L945.5 572.3L945.6 577.2L945.8 584.9L945.9 579.8L946.0 572.4L946.2 572.9L946.3 576.1L946.4 581.2L946.6 571.7L946.7 579.8L946.8 578.0L947.0 582.8L947.1 570.7L947.2 571.0L947.4 574.9L947.5 572.4L947.6 584.2L947.8 572.4L947.9 585.0L948.0 577.4L948.2 577.7L948.3 579.4L948.4 569.0L948.6 560.0L948.7 587.4L948.8 573.4L949.0 569.4L949.1 576.3L949.2 571.6L949.4 582.6L949.5 579.4L949.6 568.8L949.8 568.7L949.9 575.7L950.0 569.3L950.2 569.9L950.3 571.4L950.4 565.2L950.5 571.8L950.7 582.9L950.8 567.3L950.9 582.6L951.1 572.9L951.2 580.9L951.3 578.8L951.5 569.4L951.6 581.4L951.7 576.9L951.9 577.8L952.0 582.7L952.1 575.0L952.3 586.0L952.4 577.8L952.5 584.7L952.7 575.3L952.8 578.1L952.9 570.4L953.1 574.1L953.2 577.7L953.3 574.1L953.5 567.9L953.6 579.2L953.7 576.1L953.9 574.9L954.0 575.3L954.1 578.0L954.3 581.6L954.4 576.2L954.5 580.0L954.7 582.6L954.8 579.2L954.9 570.6L955.1 572.8L955.2 573.0L955.3 571.8L955.5 577.8L955.6 576.4L955.7 579.4L955.9 577.0L956.0 579.1L956.1 569.8L956.3 579.8L956.4 578.1L956.5 569.7L956.7 573.9L956.8 575.8L956.9 575.9L957.1 582.4L957.2 565.4L957.3 569.5L957.4 577.9L957.6 580.3L957.7 572.8L957.8 578.7L958.0 570.7L958.1 572.1L958.2 577.2L958.4 575.6L958.5 566.2L958.6 580.2L958.8 574.8L958.9 570.9L959.0 575.6L959.2 575.7L959.3 573.3L959.4 576.8L959.6 568.8L959.7 577.0L959.8 581.3L960.0 559.8L960.1 579.0L960.2 571.6L960.4 572.8L960.5 576.7L960.6 584.5L960.8 567.2L960.9 567.6L961.0 571.3L961.2 575.0L961.3 564.7L961.4 582.9L961.6 571.7L961.7 569.4L961.8 575.6L962.0 580.2L962.1 580.3L962.2 582.2L962.4 581.4L962.5 576.5L962.6 585.6L962.8 570.7L962.9 580.5L963.0 571.1L963.2 573.3L963.3 585.9L963.4 579.2L963.6 582.4L963.7 572.7L963.8 568.3L964.0 588.6L964.1 573.9L964.2 577.0L964.3 564.8L964.5 588.9L964.6 571.5L964.7 573.6L964.9 576.9L965.0 577.2L965.1 565.7L965.3 578.3L965.4 573.2L965.5 579.8L965.7 566.4L965.8 583.1L965.9 582.7L966.1 572.8L966.2 575.6L966.3 575.3L966.5 576.6L966.6 566.9L966.7 579.4L966.9 556.9L967.0 581.8L967.1 577.1L967.3 567.1L967.4 581.5L967.5 574.2L967.7 575.2L967.8 571.3L967.9 572.3L968.1 574.9L968.2 582.0L968.3 579.9L968.5 579.8L968.6 571.0L968.7 585.9L968.9 585.4L969.0 583.7L969.1 570.8L969.3 576.1L969.4 571.9L969.5 570.4L969.7 578.8L969.8 578.4L969.9 590.0L970.1 568.7L970.2 579.9L970.3 569.3L970.5 583.9L970.6 567.8L970.7 571.3L970.9 579.3L971.0 574.3L971.1 585.9L971.2 571.0L971.4 582.5L971.5 575.9L971.6 561.9L971.8 578.9L971.9 574.0L972.0 578.8L972.2 569.6L972.3 570.0L972.4 568.1L972.6 578.7L972.7 562.6L972.8 583.2L973.0 575.5L973.1 571.5L973.2 577.2L973.4 573.7L973.5 575.7L973.6 574.6L973.8 582.5L973.9 567.3L974.0 569.3L974.2 571.8L974.3 571.1L974.4 571.7L974.6 580.3L974.7 564.8L974.8 573.4L975.0 568.2L975.1 563.5L975.2 573.5L975.4 576.9L975.5 571.1L975.6 570.8L975.8 576.2L975.9 571.5L976.0 580.6L976.2 589.6L976.3 574.4L976.4 587.8L976.6 568.2L976.7 565.1L976.8 572.1L977.0 579.9L977.1 568.6L977.2 577.4L977.4 571.3L977.5 578.4L977.6 565.6L977.8 571.4L977.9 578.9L978.0 574.0L978.1 576.1L978.3 567.4L978.4 572.4L978.5 570.4L978.7 568.7L978.8 571.1L978.9 571.7L979.1 567.4L979.2 572.4L979.3 567.5L979.5 573.0L979.6 575.4L979.7 580.7L979.9 575.4L980.0 576.0L980.1 577.9L980.3 562.7L980.4 585.1L980.5 574.8L980.7 579.6L980.8 574.5L980.9 564.5L981.1 571.1L981.2 569.9L981.3 576.3L981.5 588.8L981.6 582.3L981.7 582.5L981.9 587.5L982.0 573.7L982.1 574.3L982.3 567.9L982.4 572.9L982.5 577.0L982.7 580.4L982.8 601.1L982.9 577.6L983.1 571.6L983.2 564.9L983.3 571.1L983.5 570.3L983.6 569.7L983.7 572.4L983.9 571.8L984.0 573.9L984.1 582.9L984.3 581.7L984.4 575.4L984.5 567.0L984.7 577.3L984.8 587.4L984.9 581.5L985.1 560.2L985.2 580.8L985.3 572.1L985.4 572.9L985.6 581.1L985.7 580.4L985.8 570.7L986.0 577.6L986.1 576.9L986.2 571.2L986.4 574.3L986.5 568.2L986.6 574.8L986.8 552.3L986.9 574.6L987.0 570.2L987.2 569.8L987.3 577.7L987.4 568.9L987.6 578.9L987.7 586.7L987.8 573.3L988.0 570.1L988.1 575.6L988.2 578.2L988.4 576.7L988.5 576.0L988.6 584.2L988.8 578.6L988.9 579.1L989.0 577.3L989.2 569.8L989.3 571.4L989.4 577.5L989.6 579.1L989.7 580.1L989.8 583.6L990.0 581.9L990.1 578.3L990.2 580.0L990.4 574.6L990.5 582.7L990.6 574.4L990.8 564.2L990.9 574.4L991.0 579.3L991.2 580.1L991.3 572.1L991.4 572.5L991.6 575.4L991.7 576.3L991.8 568.0L992.0 579.3L992.1 578.1L992.2 578.1L992.3 597.2L992.5 576.3L992.6 582.6L992.7 567.7L992.9 576.7L993.0 568.5L993.1 575.5L993.3 580.0L993.4 573.9L993.5 574.3L993.7 579.3L993.8 569.0L993.9 567.7L994.1 560.7L994.2 577.8L994.3 568.1L994.5 569.5L994.6 575.7L994.7 581.9L994.9 576.4L995.0 587.1L995.1 579.2L995.3 576.3L995.4 574.7L995.5 566.9L995.7 575.2L995.8 569.0L995.9 576.6L996.1 574.5L996.2 576.8L996.3 574.4L996.5 575.1L996.6 570.2L996.7 574.6L996.9 573.0L997.0 581.9L997.1 573.3L997.3 567.7L997.4 571.4L997.5 566.3L997.7 570.1L997.8 573.3L997.9 571.4L998.1 572.9L998.2 562.8L998.3 565.1L998.5 577.4L998.6 572.2L998.7 570.9L998.9 576.8L999.0 577.8L999.1 568.6L999.2 564.0L999.4 574.0L999.5 570.4L999.6 571.0L999.8 572.6L999.9 577.8L1000.0 580.1L1000.2 574.9L1000.3 576.8L1000.4 576.8L1000.6 577.1L1000.7 578.6L1000.8 568.1L1001.0 578.2L1001.1 582.1L1001.2 580.2L1001.4 580.1L1001.5 564.6L1001.6 571.2L1001.8 573.5L1001.9 584.5L1002.0 574.5L1002.2 580.6L1002.3 569.6L1002.4 580.4L1002.6 585.1L1002.7 576.7L1002.8 568.2L1003.0 573.7L1003.1 581.9L1003.2 571.0L1003.4 607.5L1003.5 574.1L1003.6 572.1L1003.8 581.7L1003.9 563.2L1004.0 575.3L1004.2 577.5L1004.3 578.3L1004.4 569.6L1004.6 577.8L1004.7 584.2L1004.8 581.6L1005.0 578.8L1005.1 572.9L1005.2 572.2L1005.4 586.2L1005.5 569.1L1005.6 585.0L1005.8 581.3L1005.9 573.6L1006.0 573.4L1006.1 577.8L1006.3 581.7L1006.4 576.8L1006.5 576.1L1006.7 579.6L1006.8 577.7L1006.9 572.5L1007.1 565.9L1007.2 570.9L1007.3 584.9L1007.5 574.0L1007.6 572.1L1007.7 586.0L1007.9 576.3L1008.0 570.1L1008.1 581.5L1008.3 584.9L1008.4 572.8L1008.5 574.6L1008.7 570.5L1008.8 577.8L1008.9 575.2L1009.1 575.4L1009.2 577.9L1009.3 586.6L1009.5 572.2L1009.6 568.5L1009.7 585.7L1009.9 577.4L1010.0 576.5L1010.1 566.1L1010.3 578.7L1010.4 583.4L1010.5 568.6L1010.7 580.5L1010.8 581.6L1010.9 563.5L1011.1 565.9L1011.2 580.2L1011.3 572.6L1011.5 576.8L1011.6 580.0L1011.7 562.8L1011.9 579.9L1012.0 569.4L1012.1 576.9L1012.3 570.6L1012.4 570.0L1012.5 575.3L1012.7 576.1L1012.8 576.4L1012.9 569.8L1013.1 575.5L1013.2 574.8L1013.3 580.4L1013.4 578.7L1013.6 567.3L1013.7 571.1L1013.8 575.8L1014.0 564.4L1014.1 573.2L1014.2 571.3L1014.4 573.6L1014.5 571.9L1014.6 586.8L1014.8 579.0L1014.9 581.6L1015.0 568.8L1015.2 579.6L1015.3 559.6L1015.4 573.2L1015.6 583.4L1015.7 582.7L1015.8 575.3L1016.0 583.6L1016.1 571.4L1016.2 582.8L1016.4 587.7L1016.5 574.8L1016.6 578.5L1016.8 573.3L1016.9 563.3L1017.0 578.3L1017.2 573.7L1017.3 578.6L1017.4 578.1L1017.6 575.3L1017.7 571.9L1017.8 578.5L1018.0 573.3L1018.1 581.2L1018.2 579.4L1018.4 563.9L1018.5 577.4L1018.6 573.7L1018.8 583.7L1018.9 566.9L1019.0 577.0L1019.2 569.3L1019.3 578.4L1019.4 581.4L1019.6 580.0L1019.7 575.0L1019.8 573.2L1020.0 570.1L1020.1 570.1L1020.2 584.4L1020.3 575.0L1020.5 574.1L1020.6 565.7L1020.7 580.3L1020.9 570.8L1021.0 569.1L1021.1 579.0L1021.3 585.8L1021.4 580.2L1021.5 584.8L1021.7 585.0L1021.8 577.5L1021.9 574.6L1022.1 572.4L1022.2 569.8L1022.3 584.8L1022.5 570.4L1022.6 572.9L1022.7 576.4L1022.9 569.9L1023.0 565.4L1023.1 573.9L1023.3 589.0L1023.4 576.6L1023.5 581.8L1023.7 583.1L1023.8 564.7L1023.9 571.0L1024.1 569.7L1024.2 570.9L1024.3 572.7L1024.5 559.7L1024.6 566.5L1024.7 570.4L1024.9 578.0L1025.0 571.6L1025.1 577.1L1025.3 573.1L1025.4 571.9L1025.5 578.0L1025.7 583.0L1025.8 582.8L1025.9 573.2L1026.1 572.3L1026.2 571.7L1026.3 581.6L1026.5 571.5L1026.6 575.4L1026.7 581.6L1026.9 570.6L1027.0 574.9L1027.1 572.4L1027.2 579.2L1027.4 585.9L1027.5 573.5L1027.6 582.9L1027.8 582.1L1027.9 512.0L1028.0 584.3L1028.2 578.6L1028.3 575.5L1028.4 575.0L1028.6 566.1L1028.7 568.2L1028.8 584.6L1029.0 567.7L1029.1 572.1L1029.2 578.3L1029.4 573.7L1029.5 585.4L1029.6 577.4L1029.8 576.3L1029.9 574.7L1030.0 575.4L1030.2 584.9L1030.3 581.0L1030.4 586.2L1030.6 569.7L1030.7 578.7L1030.8 583.0L1031.0 573.1L1031.1 578.4L1031.2 576.9L1031.4 576.6L1031.5 572.6L1031.6 577.1L1031.8 571.8L1031.9 576.9L1032.0 575.5L1032.2 579.5L1032.3 586.3L1032.4 563.9L1032.6 565.4L1032.7 576.3L1032.8 577.7L1033.0 573.7L1033.1 582.0L1033.2 582.2L1033.4 576.5L1033.5 578.4L1033.6 574.7L1033.8 583.5L1033.9 574.8L1034.0 574.5L1034.1 579.5L1034.3 570.0L1034.4 572.7L1034.5 568.7L1034.7 569.1L1034.8 569.6L1034.9 582.6L1035.1 573.5L1035.2 573.8L1035.3 567.8L1035.5 573.8L1035.6 582.6L1035.7 578.4L1035.9 568.6L1036.0 574.8L1036.1 576.6L1036.3 582.3L1036.4 582.5L1036.5 585.8L1036.7 567.3L1036.8 568.0L1036.9 579.0L1037.1 572.9L1037.2 572.5L1037.3 569.8L1037.5 579.4L1037.6 585.0L1037.7 569.0L1037.9 575.6L1038.0 567.4L1038.1 570.1L1038.3 574.2L1038.4 573.6L1038.5 560.8L1038.7 569.2L1038.8 566.9L1038.9 584.2L1039.1 577.6L1039.2 569.7L1039.3 574.6L1039.5 573.0L1039.6 570.4L1039.7 584.2L1039.9 579.1L1040.0 575.7L1040.1 577.4L1040.3 573.1L1040.4 575.3L1040.5 564.4L1040.7 565.9L1040.8 577.2L1040.9 575.4L1041.0 569.9L1041.2 582.6L1041.3 574.4L1041.4 574.9L1041.6 564.1L1041.7 576.4L1041.8 571.6L1042.0 571.1L1042.1 570.8L1042.2 568.6L1042.4 581.0L1042.5 572.0L1042.6 581.6L1042.8 573.8L1042.9 574.7L1043.0 576.5L1043.2 574.7L1043.3 565.5L1043.4 577.8L1043.6 580.4L1043.7 576.6L1043.8 577.2L1044.0 574.2L1044.1 578.2L1044.2 574.8L1044.4 566.6L1044.5 580.6L1044.6 572.9L1044.8 574.2L1044.9 570.6L1045.0 574.7L1045.2 581.3L1045.3 569.1L1045.4 576.0L1045.6 577.5L1045.7 573.9L1045.8 578.0L1046.0 574.4L1046.1 568.1L1046.2 575.4L1046.4 572.3L1046.5 581.6L1046.6 580.6L1046.8 576.6L1046.9 573.4L1047.0 571.9L1047.2 580.0L1047.3 579.0L1047.4 567.5L1047.6 580.4L1047.7 575.1L1047.8 570.4L1048.0 570.9L1048.1 579.3L1048.2 573.7L1048.3 582.2L1048.5 568.0L1048.6 568.8L1048.7 579.6L1048.9 580.1L1049.0 568.4L1049.1 578.7L1049.3 576.6L1049.4 577.2L1049.5 566.6L1049.7 575.8L1049.8 556.9L1049.9 573.8L1050.1 563.2L1050.2 572.5L1050.3 568.8L1050.5 576.5L1050.6 574.4L1050.7 580.8L1050.9 568.3L1051.0 579.8L1051.1 566.7L1051.3 574.5L1051.4 568.2L1051.5 577.9L1051.7 579.4L1051.8 577.7L1051.9 567.9L1052.1 581.9L1052.2 575.3L1052.3 570.5L1052.5 572.3L1052.6 576.4L1052.7 577.2L1052.9 565.8L1053.0 582.5L1053.1 570.8L1053.3 589.8L1053.4 575.6L1053.5 577.1L1053.7 576.4L1053.8 571.4L1053.9 578.8L1054.1 577.4L1054.2 566.5L1054.3 570.2L1054.5 570.8L1054.6 576.4L1054.7 566.6L1054.9 560.1L1055.0 576.3L1055.1 579.2L1055.2 575.5L1055.4 569.2L1055.5 576.4L1055.6 584.5L1055.8 574.0L1055.9 576.2L1056.0 570.4L1056.2 573.2L1056.3 582.3L1056.4 572.9L1056.6 581.7L1056.7 581.1L1056.8 572.0L1057.0 570.7L1057.1 585.0L1057.2 571.9L1057.4 578.3L1057.5 579.7L1057.6 572.1L1057.8 566.5L1057.9 564.6L1058.0 566.8L1058.2 582.1L1058.3 584.6L1058.4 587.0L1058.6 567.7L1058.7 586.2L1058.8 577.0L1059.0 577.7L1059.1 578.5L1059.2 571.6L1059.4 583.2L1059.5 571.4L1059.6 571.7L1059.8 576.8L1059.9 582.0L1060.0 578.0L1060.2 574.4L1060.3 584.1L1060.4 592.7L1060.6 574.5L1060.7 574.4L1060.8 583.3L1061.0 576.2L1061.1 572.5L1061.2 581.4L1061.4 571.1L1061.5 572.7L1061.6 566.5L1061.8 580.5L1061.9 564.8L1062.0 583.6L1062.1 581.8L1062.3 576.7L1062.4 573.0L1062.5 576.7L1062.7 574.9L1062.8 574.2L1062.9 564.1L1063.1 580.5L1063.2 586.6L1063.3 574.6L1063.5 563.1L1063.6 577.1L1063.7 571.3L1063.9 577.7L1064.0 570.9L1064.1 573.2L1064.3 576.5L1064.4 571.6L1064.5 570.6L1064.7 581.1L1064.8 579.2L1064.9 567.2L1065.1 581.9L1065.2 574.7L1065.3 582.4L1065.5 567.8L1065.6 579.1L1065.7 580.9L1065.9 573.0L1066.0 569.8L1066.1 578.7L1066.3 575.1L1066.4 569.5L1066.5 578.1L1066.7 572.1L1066.8 565.4L1066.9 581.8L1067.1 575.1L1067.2 578.0L1067.3 577.5L1067.5 572.6L1067.6 582.1L1067.7 571.0L1067.9 582.0L1068.0 582.7L1068.1 574.2L1068.3 577.1L1068.4 571.5L1068.5 579.3L1068.7 579.6L1068.8 573.6L1068.9 578.8L1069.0 572.8L1069.2 578.7L1069.3 574.0L1069.4 583.6L1069.6 563.3L1069.7 565.8L1069.8 574.4L1070.0 568.0L1070.1 576.7L1070.2 566.7L1070.4 573.7L1070.5 575.3L1070.6 579.8L1070.8 578.2L1070.9 566.7L1071.0 570.6L1071.2 572.3L1071.3 578.3L1071.4 572.1L1071.6 574.3L1071.7 570.5L1071.8 572.3L1072.0 578.5L1072.1 579.9L1072.2 582.1L1072.4 593.7L1072.5 590.5L1072.6 573.6L1072.8 576.9L1072.9 578.5L1073.0 570.1L1073.2 573.4L1073.3 577.9L1073.4 579.6L1073.6 579.1L1073.7 574.1L1073.8 578.9L1074.0 575.4L1074.1 576.0L1074.2 574.4L1074.4 569.7L1074.5 579.5L1074.6 577.1L1074.8 588.5L1074.9 575.3L1075.0 572.6L1075.2 567.1L1075.3 576.3L1075.4 565.2L1075.6 570.5L1075.7 574.9L1075.8 570.2L1075.9 570.5L1076.1 576.2L1076.2 572.0L1076.3 572.3L1076.5 571.4L1076.6 567.4L1076.7 578.9L1076.9 586.6L1077.0 582.2L1077.1 570.8L1077.3 582.7L1077.4 576.4L1077.5 567.7L1077.7 576.0L1077.8 572.9L1077.9 579.2L1078.1 571.5L1078.2 564.4L1078.3 576.3L1078.5 571.3L1078.6 578.2L1078.7 576.1L1078.9 573.7L1079.0 577.4L1079.1 575.3L1079.3 566.0L1079.4 584.4L1079.5 575.2L1079.7 582.8L1079.8 577.5L1079.9 567.9L1080.1 573.7L1080.2 573.5L1080.3 582.0L1080.5 576.6L1080.6 576.2L1080.7 575.8L1080.9 573.3L1081.0 569.1L1081.1 579.5L1081.3 578.4L1081.4 570.8L1081.5 575.3L1081.7 552.3L1081.8 579.8L1081.9 572.1L1082.1 583.9L1082.2 563.6L1082.3 584.9L1082.5 575.3L1082.6 573.3L1082.7 567.7L1082.9 577.8L1083.0 573.1L1083.1 565.2L1083.2 576.9L1083.4 574.8L1083.5 573.0L1083.6 570.4L1083.8 573.5L1083.9 579.7L1084.0 575.5L1084.2 568.2L1084.3 587.0L1084.4 579.9L1084.6 578.1L1084.7 573.0L1084.8 561.6L1085.0 565.6L1085.1 561.0L1085.2 577.8L1085.4 573.1L1085.5 564.9L1085.6 579.7L1085.8 578.1L1085.9 585.9L1086.0 564.7L1086.2 580.2L1086.3 582.6L1086.4 574.9L1086.6 578.5L1086.7 577.3L1086.8 573.9L1087.0 575.9L1087.1 564.3L1087.2 572.9L1087.4 584.0L1087.5 570.2L1087.6 575.0L1087.8 575.5L1087.9 572.3L1088.0 568.7L1088.2 585.6L1088.3 549.5L1088.4 581.0L1088.6 576.9L1088.7 578.2L1088.8 570.8L1089.0 571.0L1089.1 572.2L1089.2 575.4L1089.4 577.9L1089.5 580.2L1089.6 582.5L1089.8 563.1L1089.9 579.2L1090.0 573.9L1090.1 579.8L1090.3 572.4L1090.4 579.8L1090.5 578.5L1090.7 575.6L1090.8 574.0L1090.9 579.5L1091.1 581.7L1091.2 584.3L1091.3 575.4L1091.5 570.8L1091.6 529.2L1091.7 570.9L1091.9 573.9L1092.0 579.7L1092.1 572.4L1092.3 576.3L1092.4 585.1L1092.5 580.3L1092.7 584.5L1092.8 566.8L1092.9 576.1L1093.1 568.3L1093.2 574.4L1093.3 576.7L1093.5 575.6L1093.6 563.8L1093.7 573.7L1093.9 573.1L1094.0 576.4L1094.1 578.1L1094.3 572.9L1094.4 584.1L1094.5 572.5L1094.7 578.0L1094.8 568.5L1094.9 583.5L1095.1 572.6L1095.2 580.9L1095.3 577.6L1095.5 574.1L1095.6 581.4L1095.7 583.4L1095.9 574.2L1096.0 576.4L1096.1 587.9L1096.3 583.2L1096.4 571.9L1096.5 580.1L1096.7 570.9L1096.8 567.1L1096.9 582.6L1097.0 581.4L1097.2 567.9L1097.3 572.7L1097.4 565.7L1097.6 572.0L1097.7 571.3L1097.8 578.5L1098.0 570.9L1098.1 580.4L1098.2 585.3L1098.4 579.4L1098.5 578.1L1098.6 585.3L1098.8 579.0L1098.9 582.8L1099.0 574.8L1099.2 570.7L1099.3 585.7L1099.4 575.0L1099.6 580.6L1099.7 579.4L1099.8 572.4L1100.0 569.8L1100.1 575.2L1100.2 578.0L1100.4 565.0L1100.5 572.8L1100.6 583.5L1100.8 574.5L1100.9 567.3L1101.0 574.8L1101.2 573.0L1101.3 571.7L1101.4 583.6L1101.6 565.3L1101.7 575.7L1101.8 584.3L1102.0 568.0L1102.1 576.6L1102.2 573.2L1102.4 590.6L1102.5 572.9L1102.6 569.7L1102.8 569.4L1102.9 586.5L1103.0 578.5L1103.2 573.8L1103.3 575.8L1103.4 581.1L1103.6 565.1L1103.7 579.4L1103.8 569.5L1103.9 574.0L1104.1 573.6L1104.2 577.8L1104.3 563.1L1104.5 580.6L1104.6 581.3L1104.7 570.1L1104.9 555.2L1105.0 567.2L1105.1 576.6L1105.3 578.3L1105.4 577.3L1105.5 573.0L1105.7 581.7L1105.8 576.2L1105.9 572.3L1106.1 575.5L1106.2 569.9L1106.3 583.0L1106.5 579.2L1106.6 580.0L1106.7 570.7L1106.9 582.9L1107.0 573.8L1107.1 571.3L1107.3 571.6L1107.4 576.3L1107.5 577.2L1107.7 571.9L1107.8 575.9L1107.9 577.3L1108.1 584.3L1108.2 587.4L1108.3 576.7L1108.5 577.3L1108.6 571.8L1108.7 568.5L1108.9 573.6L1109.0 573.0L1109.1 573.3L1109.3 565.4L1109.4 571.4L1109.5 573.6L1109.7 575.4L1109.8 570.9L1109.9 581.8L1110.1 578.2L1110.2 581.2L1110.3 580.0L1110.5 565.7L1110.6 568.4L1110.7 567.5L1110.8 573.3L1111.0 579.2L1111.1 578.5L1111.2 584.7L1111.4 588.8L1111.5 573.8L1111.6 579.4L1111.8 578.2L1111.9 567.6L1112.0 571.5L1112.2 593.7L1112.3 582.4L1112.4 573.3L1112.6 580.4L1112.7 580.8L1112.8 583.2L1113.0 577.7L1113.1 563.8L1113.2 585.8L1113.4 578.0L1113.5 578.6L1113.6 570.0L1113.8 578.2L1113.9 574.3L1114.0 576.7L1114.2 582.7L1114.3 576.4L1114.4 580.5L1114.6 573.8L1114.7 569.5L1114.8 579.7L1115.0 574.7L1115.1 580.9L1115.2 577.4L1115.4 576.8L1115.5 570.0L1115.6 568.2L1115.8 575.3L1115.9 578.7L1116.0 574.8L1116.2 569.4L1116.3 566.5L1116.4 583.2L1116.6 581.3L1116.7 568.5L1116.8 572.2L1117.0 564.0L1117.1 575.2L1117.2 579.0L1117.4 575.7L1117.5 569.0L1117.6 580.4L1117.8 570.5L1117.9 568.4L1118.0 571.6L1118.1 580.1L1118.3 568.4L1118.4 577.1L1118.5 574.0L1118.7 574.5L1118.8 566.0L1118.9 578.8L1119.1 572.7L1119.2 573.0L1119.3 573.0L1119.5 579.8L1119.6 582.4L1119.7 574.1L1119.9 566.5L1120.0 576.1L1120.1 568.2L1120.3 578.8L1120.4 572.6L1120.5 573.2L1120.7 578.3L1120.8 578.7L1120.9 578.8L1121.1 578.8L1121.2 581.9L1121.3 568.0L1121.5 574.9L1121.6 572.2L1121.7 583.1L1121.9 573.9L1122.0 579.7L1122.1 583.3L1122.3 571.4L1122.4 574.4L1122.5 585.5L1122.7 579.1L1122.8 580.5L1122.9 583.0L1123.1 585.8L1123.2 583.4L1123.3 577.8L1123.5 569.9L1123.6 563.4L1123.7 570.1L1123.9 577.7L1124.0 580.4L1124.1 579.8L1124.3 575.2L1124.4 583.9L1124.5 590.8L1124.7 569.2L1124.8 573.6L1124.9 579.8L1125.0 564.8L1125.2 578.0L1125.3 578.1L1125.4 568.4L1125.6 586.1L1125.7 566.5L1125.8 572.8L1126.0 589.0L1126.1 577.5L1126.2 580.9L1126.4 568.5L1126.5 575.7L1126.6 571.1L1126.8 570.6L1126.9 572.0L1127.0 581.9L1127.2 577.8L1127.3 575.4L1127.4 573.9L1127.6 575.4L1127.7 573.0L1127.8 585.0L1128.0 577.3L1128.1 586.6L1128.2 568.3L1128.4 578.2L1128.5 565.4L1128.6 573.7L1128.8 575.7L1128.9 569.3L1129.0 566.8L1129.2 575.1L1129.3 587.4L1129.4 576.7L1129.6 570.0L1129.7 576.6L1129.8 578.8L1130.0 584.3L1130.1 575.7L1130.2 577.9L1130.4 578.7L1130.5 576.6L1130.6 581.9L1130.8 578.1L1130.9 571.1L1131.0 585.8L1131.2 574.2L1131.3 575.2L1131.4 570.8L1131.6 569.1L1131.7 580.3L1131.8 579.7L1131.9 580.1L1132.1 603.9L1132.2 569.6L1132.3 579.2L1132.5 568.4L1132.6 565.8L1132.7 576.6L1132.9 576.8L1133.0 572.0L1133.1 565.8L1133.3 578.8L1133.4 569.4L1133.5 571.3L1133.7 574.2L1133.8 565.8L1133.9 577.1L1134.1 566.3L1134.2 576.5L1134.3 566.8L1134.5 574.8L1134.6 576.0L1134.7 574.4L1134.9 582.2L1135.0 570.9L1135.1 567.4L1135.3 573.0L1135.4 575.0L1135.5 575.2L1135.7 585.2L1135.8 572.3L1135.9 568.9L1136.1 570.5L1136.2 575.9L1136.3 575.6L1136.5 574.1L1136.6 566.3L1136.7 586.8L1136.9 581.2L1137.0 587.3L1137.1 571.7L1137.3 578.1L1137.4 570.2L1137.5 576.0L1137.7 575.4L1137.8 567.7L1137.9 570.4L1138.1 578.7L1138.2 566.6L1138.3 573.6L1138.5 573.9L1138.6 577.5L1138.7 584.1L1138.8 581.1L1139.0 580.3L1139.1 574.3L1139.2 568.2L1139.4 512.0L1139.5 574.4L1139.6 587.2L1139.8 578.4L1139.9 574.1L1140.0 580.3L1140.2 583.4L1140.3 573.9L1140.4 572.3L1140.6 583.0L1140.7 571.7L1140.8 577.6L1141.0 572.3L1141.1 579.6L1141.2 570.1L1141.4 573.6L1141.5 582.0L1141.6 569.4L1141.8 585.9L1141.9 578.3L1142.0 561.8L1142.2 565.4L1142.3 575.4L1142.4 572.0L1142.6 580.5L1142.7 565.7L1142.8 580.2L1143.0 572.0L1143.1 571.1L1143.2 575.4L1143.4 594.6L1143.5 575.7L1143.6 573.3L1143.8 572.3L1143.9 583.2L1144.0 556.9L1144.2 576.9L1144.3 573.9L1144.4 570.4L1144.6 576.5L1144.7 573.7L1144.8 577.4L1145.0 570.9L1145.1 570.6L1145.2 575.2L1145.4 567.2L1145.5 575.2L1145.6 575.4L1145.8 566.7L1145.9 571.1L1146.0 582.2L1146.1 594.3L1146.3 562.9L1146.4 563.6L1146.5 591.8L1146.7 578.3L1146.8 583.4L1146.9 574.1L1147.1 575.6L1147.2 574.1L1147.3 572.7L1147.5 569.7L1147.6 586.7L1147.7 588.3L1147.9 577.4L1148.0 573.0L1148.1 572.3L1148.3 580.2L1148.4 567.1L1148.5 585.1L1148.7 582.1L1148.8 568.9L1148.9 570.2L1149.1 573.7L1149.2 567.7L1149.3 569.9L1149.5 578.9L1149.6 573.0L1149.7 574.7L1149.9 581.4L1150.0 577.6L1150.1 573.3L1150.3 581.6L1150.4 581.5L1150.5 570.5L1150.7 575.0L1150.8 578.1L1150.9 581.7L1151.1 581.5L1151.2 569.8L1151.3 571.3L1151.5 578.8L1151.6 577.2L1151.7 580.1L1151.9 580.1L1152.0 583.3L1152.1 575.0L1152.3 576.5L1152.4 575.0L1152.5 580.2L1152.7 572.0L1152.8 569.4L1152.9 587.8L1153.0 578.7L1153.2 581.3L1153.3 577.5L1153.4 583.3L1153.6 571.8L1153.7 575.9L1153.8 575.8L1154.0 571.8L1154.1 570.4L1154.2 577.0L1154.4 571.6L1154.5 573.4L1154.6 577.3L1154.8 575.6L1154.9 580.7L1155.0 578.9L1155.2 567.8L1155.3 565.3L1155.4 574.4L1155.6 576.4L1155.7 580.0L1155.8 565.4L1156.0 582.8L1156.1 589.5L1156.2 576.1L1156.4 563.9L1156.5 573.9L1156.6 570.8L1156.8 568.2L1156.9 578.8L1157.0 582.6L1157.2 573.4L1157.3 571.2L1157.4 573.6L1157.6 561.8L1157.7 581.9L1157.8 577.1L1158.0 579.2L1158.1 571.0L1158.2 573.6L1158.4 574.6L1158.5 573.1L1158.6 575.7L1158.8 578.6L1158.9 577.0L1159.0 571.7L1159.2 573.5L1159.3 572.2L1159.4 572.3L1159.6 579.9L1159.7 577.3L1159.8 578.3L1159.9 573.5L1160.1 572.5L1160.2 569.9L1160.3 565.9L1160.5 571.8L1160.6 577.7L1160.7 579.7L1160.9 575.1L1161.0 577.6L1161.1 585.3L1161.3 569.2L1161.4 575.5L1161.5 577.4L1161.7 583.8L1161.8 573.6L1161.9 567.4L1162.1 567.2L1162.2 570.4L1162.3 580.0L1162.5 574.5L1162.6 574.4L1162.7 576.0L1162.9 570.6L1163.0 579.6L1163.1 561.1L1163.3 565.8L1163.4 582.6L1163.5 569.0L1163.7 575.5L1163.8 566.8L1163.9 581.5L1164.1 580.3L1164.2 571.4L1164.3 558.9L1164.5 577.1L1164.6 574.9L1164.7 573.9L1164.9 579.1L1165.0 571.1L1165.1 573.4L1165.3 567.2L1165.4 571.4L1165.5 586.7L1165.7 567.7L1165.8 571.8L1165.9 575.6L1166.1 583.3L1166.2 573.2L1166.3 576.9L1166.5 579.7L1166.6 578.3L1166.7 572.0L1166.8 578.9L1167.0 571.2L1167.1 571.3L1167.2 569.9L1167.4 580.7L1167.5 582.5L1167.6 569.3L1167.8 586.0L1167.9 574.7L1168.0 570.2L1168.2 585.6L1168.3 583.2L1168.4 572.3L1168.6 580.9L1168.7 569.7L1168.8 575.4L1169.0 571.8L1169.1 575.2L1169.2 571.1L1169.4 591.3L1169.5 572.3L1169.6 578.6L1169.8 570.2L1169.9 578.1L1170.0 584.2L1170.2 570.2L1170.3 571.1L1170.4 573.0L1170.6 572.3L1170.7 573.4L1170.8 579.3L1171.0 575.8L1171.1 571.7L1171.2 573.9L1171.4 565.6L1171.5 585.2L1171.6 581.7L1171.8 577.4L1171.9 573.3L1172.0 578.9L1172.2 576.7L1172.3 571.0L1172.4 574.3L1172.6 576.4L1172.7 570.4L1172.8 579.7L1173.0 582.9L1173.1 569.2L1173.2 588.5L1173.4 574.1L1173.5 577.1L1173.6 577.8L1173.7 567.1L1173.9 573.2L1174.0 576.8L1174.1 580.1L1174.3 575.3L1174.4 579.2L1174.5 572.9L1174.7 562.4L1174.8 581.4L1174.9 571.5L1175.1 574.6L1175.2 574.2L1175.3 576.5L1175.5 583.0L1175.6 575.0L1175.7 569.8L1175.9 568.7L1176.0 578.4L1176.1 577.7L1176.3 576.1L1176.4 580.9L1176.5 565.5L1176.7 575.3L1176.8 574.4L1176.9 573.8L1177.1 577.3L1177.2 576.2L1177.3 586.8L1177.5 569.4L1177.6 569.3L1177.7 569.7L1177.9 573.4L1178.0 569.1L1178.1 571.5L1178.3 580.8L1178.4 573.2L1178.5 571.0L1178.7 578.5L1178.8 585.8L1178.9 572.8L1179.1 575.8L1179.2 583.2L1179.3 576.7L1179.5 580.2L1179.6 577.3L1179.7 569.7L1179.9 571.6L1180.0 575.2L1180.1 583.1L1180.3 580.1L1180.4 585.6L1180.5 583.1L1180.7 572.9L1180.8 578.2L1180.9 577.1L1181.0 574.5L1181.2 585.6L1181.3 584.4L1181.4 565.5L1181.6 577.6L1181.7 580.9L1181.8 577.7L1182.0 574.4L1182.1 583.5L1182.2 581.1L1182.4 574.4L1182.5 581.2L1182.6 577.2L1182.8 582.5L1182.9 582.2L1183.0 641.6L1183.2 641.6L1183.3 641.6L1183.4 641.6" stroke="#00f" stroke-width="1.65" fill="none" clip-path="url(#c3)" stroke-linejoin="round"/>
<rect x="911.1" y="517.0" width="273.80000000000007" height="119.60000000000002" fill="none" stroke="#000" stroke-width="1.7"/>
<text x="912.40" y="660.0" font-size="9.72" text-anchor="middle">0</text>
<text x="978.75" y="660.0" font-size="9.72" text-anchor="middle">500</text>
<text x="1045.10" y="660.0" font-size="9.72" text-anchor="middle">1000</text>
<text x="1111.45" y="660.0" font-size="9.72" text-anchor="middle">1500</text>
<text x="1177.80" y="660.0" font-size="9.72" text-anchor="middle">2000</text>
<text x="895.5" y="630.38" font-size="9.72" text-anchor="end">50</text>
<text x="895.5" y="584.30" font-size="9.72" text-anchor="end">100</text>
<text x="895.5" y="538.22" font-size="9.72" text-anchor="end">150</text>
<path d="M911.80 636.6v7M978.15 636.6v7M1044.50 636.6v7M1110.85 636.6v7M1177.20 636.6v7M911.1 625.98h-7M911.1 579.90h-7M911.1 533.82h-7" stroke="#000" stroke-width="1.7" fill="none"/>
<text x="1048" y="677.5" font-size="10.42" text-anchor="middle">X</text>
<text x="866" y="578.5" font-size="10.42" text-anchor="middle" transform="rotate(-90 866 578.5)">counts</text>
<text x="1194" y="575.5" font-size="10.42" text-anchor="middle" transform="rotate(90 1194 575.5)">cut in x</text>
<rect x="1115.3" y="519.5" width="67" height="17" rx="2" fill="#fff" fill-opacity="0.8" stroke="#ccc" stroke-width="1.3"/>
<path d="M1118.1 527.8H1140.6" stroke="#00f" stroke-width="1.6"/>
<text x="1144.2" y="531.3" font-size="9.72" text-anchor="start">y=550</text>
<clipPath id="c4"><rect x="911.1" y="688.9" width="273.80000000000007" height="119.70000000000005"/></clipPath>
<path d="M913.0 813.6L913.2 813.6L913.5 813.6L913.7 813.6L914.0 695.1L914.2 683.9L914.5 684.0L914.7 683.9L915.0 685.7L915.2 685.0L915.5 683.9L915.7 693.0L915.9 683.9L916.2 690.6L916.4 690.5L916.7 693.8L916.9 683.9L917.2 683.9L917.4 691.7L917.7 689.3L917.9 683.9L918.1 684.9L918.4 694.4L918.6 686.9L918.9 692.3L919.1 685.9L919.4 686.4L919.6 683.9L919.9 695.3L920.1 690.6L920.4 687.5L920.6 683.9L920.8 695.0L921.1 683.9L921.3 690.8L921.6 683.9L921.8 683.9L922.1 697.4L922.3 684.6L922.6 690.3L922.8 688.6L923.0 689.6L923.3 686.9L923.5 699.6L923.8 690.1L924.0 689.7L924.3 683.9L924.5 696.1L924.8 702.8L925.0 687.7L925.2 748.9L925.5 690.8L925.7 683.9L926.0 700.7L926.2 698.5L926.5 691.4L926.7 702.1L927.0 692.8L927.2 699.0L927.5 699.3L927.7 690.0L927.9 696.9L928.2 697.3L928.4 692.2L928.7 701.8L928.9 690.3L929.2 690.1L929.4 688.1L929.7 702.6L929.9 695.2L930.1 695.6L930.4 686.9L930.6 688.1L930.9 694.5L931.1 703.5L931.4 704.0L931.6 698.8L931.9 701.7L932.1 694.3L932.4 689.9L932.6 703.4L932.8 703.8L933.1 691.7L933.3 695.4L933.6 700.9L933.8 697.6L934.1 710.2L934.3 701.6L934.6 700.0L934.8 704.1L935.0 683.9L935.3 683.9L935.5 705.7L935.8 705.0L936.0 683.9L936.3 691.5L936.5 683.9L936.8 698.9L937.0 702.9L937.3 700.5L937.5 691.5L937.7 703.8L938.0 699.3L938.2 693.9L938.5 708.0L938.7 699.6L939.0 712.1L939.2 701.7L939.5 704.6L939.7 694.7L940.0 693.7L940.2 698.3L940.4 697.9L940.7 703.4L940.9 714.2L941.2 701.6L941.4 700.5L941.7 697.7L941.9 698.7L942.2 695.9L942.4 699.7L942.6 704.1L942.9 695.8L943.1 710.9L943.4 712.7L943.6 709.9L943.9 705.6L944.1 705.9L944.4 704.8L944.6 705.1L944.9 693.7L945.1 713.0L945.3 707.6L945.6 714.1L945.8 704.4L946.1 716.6L946.3 706.1L946.6 708.2L946.8 696.7L947.1 709.2L947.3 709.9L947.5 700.9L947.8 705.6L948.0 698.2L948.3 703.9L948.5 703.8L948.8 704.6L949.0 713.9L949.3 710.3L949.5 708.4L949.8 712.7L950.0 712.4L950.2 721.5L950.5 703.6L950.7 705.3L951.0 712.3L951.2 705.6L951.5 713.5L951.7 714.5L952.0 705.7L952.2 683.9L952.4 702.3L952.7 708.2L952.9 709.2L953.2 710.5L953.4 705.2L953.7 714.7L953.9 712.5L954.2 702.9L954.4 719.2L954.6 712.2L954.9 709.3L955.1 718.8L955.4 710.6L955.6 712.7L955.9 703.5L956.1 712.8L956.4 709.5L956.6 709.9L956.9 712.9L957.1 712.6L957.3 707.3L957.6 703.2L957.8 714.9L958.1 715.0L958.3 717.6L958.6 715.4L958.8 718.3L959.1 712.6L959.3 712.9L959.5 716.5L959.8 716.4L960.0 700.8L960.3 710.1L960.5 712.3L960.8 704.1L961.0 721.1L961.3 714.8L961.5 706.7L961.8 711.3L962.0 711.0L962.2 714.1L962.5 714.0L962.7 704.9L963.0 702.9L963.2 717.1L963.5 716.9L963.7 722.6L964.0 716.7L964.2 720.6L964.5 715.7L964.7 710.2L964.9 718.7L965.2 714.6L965.4 720.2L965.7 712.2L965.9 713.6L966.2 720.9L966.4 724.4L966.7 715.2L966.9 727.2L967.1 716.8L967.4 714.1L967.6 732.3L967.9 717.9L968.1 715.5L968.4 714.8L968.6 723.6L968.9 715.9L969.1 715.8L969.4 715.4L969.6 720.0L969.8 713.2L970.1 712.3L970.3 706.3L970.6 717.4L970.8 717.3L971.1 719.7L971.3 710.1L971.6 722.4L971.8 719.2L972.0 712.9L972.3 716.9L972.5 718.2L972.8 718.9L973.0 718.3L973.3 718.3L973.5 713.1L973.8 715.9L974.0 728.0L974.2 726.6L974.5 714.4L974.7 711.8L975.0 720.1L975.2 724.8L975.5 712.9L975.7 716.8L976.0 719.0L976.2 728.6L976.5 727.1L976.7 730.5L976.9 722.8L977.2 718.6L977.4 726.2L977.7 732.3L977.9 724.7L978.2 725.0L978.4 728.4L978.7 719.5L978.9 714.8L979.1 719.5L979.4 719.3L979.6 729.0L979.9 719.0L980.1 723.8L980.4 723.7L980.6 731.8L980.9 721.8L981.1 728.4L981.4 716.5L981.6 726.8L981.8 733.4L982.1 727.4L982.3 727.8L982.6 728.2L982.8 724.8L983.1 724.4L983.3 725.2L983.6 721.8L983.8 725.7L984.0 734.4L984.3 720.7L984.5 724.1L984.8 727.3L985.0 735.4L985.3 729.8L985.5 733.6L985.8 726.4L986.0 734.0L986.3 718.0L986.5 725.2L986.7 722.6L987.0 729.6L987.2 743.4L987.5 714.4L987.7 718.6L988.0 729.0L988.2 724.2L988.5 716.9L988.7 721.6L989.0 732.8L989.2 729.3L989.4 719.0L989.7 716.1L989.9 723.9L990.2 683.9L990.4 721.8L990.7 723.6L990.9 715.6L991.2 728.2L991.4 728.5L991.6 730.8L991.9 718.8L992.1 731.3L992.4 725.8L992.6 730.1L992.9 722.1L993.1 723.1L993.4 728.8L993.6 724.3L993.9 731.2L994.1 729.3L994.3 720.0L994.6 725.5L994.8 737.3L995.1 731.2L995.3 734.0L995.6 727.1L995.8 735.4L996.1 733.7L996.3 723.7L996.5 740.2L996.8 722.8L997.0 732.4L997.3 727.3L997.5 727.9L997.8 738.6L998.0 726.5L998.3 736.1L998.5 729.9L998.8 748.7L999.0 724.1L999.2 730.7L999.5 732.8L999.7 726.7L1000.0 728.5L1000.2 723.0L1000.5 731.6L1000.7 731.5L1001.0 727.5L1001.2 727.5L1001.4 731.2L1001.7 726.1L1001.9 738.8L1002.2 726.4L1002.4 724.7L1002.7 740.6L1002.9 728.0L1003.2 731.4L1003.4 727.8L1003.6 739.9L1003.9 737.1L1004.1 742.7L1004.4 732.6L1004.6 732.1L1004.9 730.8L1005.1 720.1L1005.4 740.6L1005.6 738.9L1005.9 734.3L1006.1 722.1L1006.3 742.4L1006.6 730.1L1006.8 734.4L1007.1 731.0L1007.3 749.1L1007.6 729.1L1007.8 736.7L1008.1 735.3L1008.3 729.5L1008.5 736.7L1008.8 743.8L1009.0 738.6L1009.3 727.9L1009.5 734.9L1009.8 742.7L1010.0 714.7L1010.3 745.3L1010.5 733.2L1010.8 737.7L1011.0 731.4L1011.2 742.7L1011.5 735.5L1011.7 739.8L1012.0 737.3L1012.2 756.3L1012.5 732.4L1012.7 737.9L1013.0 746.0L1013.2 738.8L1013.5 740.2L1013.7 755.1L1013.9 734.4L1014.2 734.6L1014.4 739.3L1014.7 746.4L1014.9 740.0L1015.2 746.2L1015.4 739.4L1015.7 734.3L1015.9 747.7L1016.1 736.5L1016.4 741.0L1016.6 743.9L1016.9 727.9L1017.1 740.3L1017.4 729.7L1017.6 741.0L1017.9 745.4L1018.1 733.1L1018.4 743.8L1018.6 740.5L1018.8 732.3L1019.1 737.3L1019.3 731.6L1019.6 746.1L1019.8 741.4L1020.1 731.2L1020.3 744.2L1020.6 742.3L1020.8 741.2L1021.0 736.7L1021.3 741.4L1021.5 726.8L1021.8 743.1L1022.0 734.4L1022.3 743.4L1022.5 734.5L1022.8 744.6L1023.0 751.9L1023.2 736.7L1023.5 733.2L1023.7 742.3L1024.0 751.7L1024.2 736.6L1024.5 744.9L1024.7 743.6L1025.0 735.7L1025.2 741.3L1025.5 737.5L1025.7 744.5L1025.9 742.3L1026.2 736.0L1026.4 744.5L1026.7 739.7L1026.9 740.9L1027.2 737.7L1027.4 741.9L1027.7 741.6L1027.9 731.8L1028.2 740.5L1028.4 741.9L1028.6 753.5L1028.9 747.5L1029.1 729.2L1029.4 735.3L1029.6 744.7L1029.9 741.0L1030.1 747.8L1030.4 749.0L1030.6 750.3L1030.8 748.0L1031.1 749.6L1031.3 740.0L1031.6 742.8L1031.8 736.9L1032.1 742.5L1032.3 743.0L1032.6 742.7L1032.8 739.1L1033.0 765.5L1033.3 738.7L1033.5 744.4L1033.8 758.1L1034.0 746.0L1034.3 758.4L1034.5 752.9L1034.8 761.7L1035.0 753.3L1035.3 747.6L1035.5 751.2L1035.7 740.4L1036.0 748.5L1036.2 749.3L1036.5 748.4L1036.7 745.2L1037.0 753.8L1037.2 738.9L1037.5 739.3L1037.7 754.0L1038.0 748.8L1038.2 743.6L1038.4 754.9L1038.7 759.6L1038.9 740.8L1039.2 749.3L1039.4 748.3L1039.7 749.4L1039.9 739.6L1040.2 758.9L1040.4 750.5L1040.6 752.1L1040.9 757.1L1041.1 760.2L1041.4 753.8L1041.6 745.9L1041.9 735.1L1042.1 744.2L1042.4 747.3L1042.6 747.0L1042.8 693.7L1043.1 743.8L1043.3 745.6L1043.6 744.2L1043.8 751.2L1044.1 748.9L1044.3 751.5L1044.6 749.8L1044.8 739.1L1045.1 752.2L1045.3 734.8L1045.5 735.6L1045.8 744.8L1046.0 745.1L1046.3 743.6L1046.5 743.1L1046.8 758.4L1047.0 754.5L1047.3 757.6L1047.5 748.5L1047.8 745.5L1048.0 747.6L1048.2 741.0L1048.5 743.4L1048.7 750.8L1049.0 753.5L1049.2 751.7L1049.5 734.8L1049.7 746.9L1050.0 751.0L1050.2 745.0L1050.4 757.1L1050.7 746.7L1050.9 750.3L1051.2 747.3L1051.4 746.7L1051.7 767.2L1051.9 753.7L1052.2 747.0L1052.4 749.8L1052.7 762.3L1052.9 749.7L1053.1 747.2L1053.4 745.1L1053.6 748.6L1053.9 763.3L1054.1 759.4L1054.4 760.1L1054.6 742.5L1054.9 750.1L1055.1 777.5L1055.3 753.7L1055.6 753.5L1055.8 747.6L1056.1 748.3L1056.3 754.5L1056.6 743.9L1056.8 752.8L1057.1 756.8L1057.3 742.4L1057.5 762.8L1057.8 760.3L1058.0 741.3L1058.3 751.7L1058.5 754.5L1058.8 759.7L1059.0 755.3L1059.3 754.9L1059.5 753.6L1059.8 767.0L1060.0 753.9L1060.2 762.2L1060.5 752.9L1060.7 753.9L1061.0 757.1L1061.2 763.3L1061.5 751.0L1061.7 757.3L1062.0 751.2L1062.2 748.0L1062.5 776.6L1062.7 758.8L1062.9 766.2L1063.2 754.1L1063.4 755.6L1063.7 760.3L1063.9 756.4L1064.2 752.3L1064.4 761.1L1064.7 752.0L1064.9 749.8L1065.1 757.0L1065.4 747.7L1065.6 757.5L1065.9 761.0L1066.1 753.1L1066.4 758.9L1066.6 764.4L1066.9 752.3L1067.1 751.9L1067.3 756.1L1067.6 751.6L1067.8 758.7L1068.1 749.5L1068.3 751.5L1068.6 758.1L1068.8 761.0L1069.1 758.2L1069.3 749.6L1069.6 761.9L1069.8 762.5L1070.0 752.2L1070.3 757.3L1070.5 763.4L1070.8 759.5L1071.0 756.7L1071.3 753.5L1071.5 747.0L1071.8 749.3L1072.0 751.1L1072.2 757.0L1072.5 763.8L1072.7 757.5L1073.0 766.8L1073.2 754.6L1073.5 749.2L1073.7 753.1L1074.0 756.4L1074.2 762.1L1074.5 745.6L1074.7 750.4L1074.9 766.3L1075.2 751.1L1075.4 753.8L1075.7 757.1L1075.9 756.7L1076.2 758.5L1076.4 751.1L1076.7 759.6L1076.9 756.5L1077.2 756.2L1077.4 765.1L1077.6 743.1L1077.9 758.9L1078.1 755.6L1078.4 761.3L1078.6 749.2L1078.9 761.3L1079.1 755.8L1079.4 760.4L1079.6 764.7L1079.8 766.6L1080.1 763.1L1080.3 759.9L1080.6 764.4L1080.8 762.4L1081.1 756.2L1081.3 751.4L1081.6 768.2L1081.8 753.0L1082.0 754.0L1082.3 759.2L1082.5 753.8L1082.8 762.3L1083.0 751.7L1083.3 762.7L1083.5 769.2L1083.8 772.0L1084.0 744.1L1084.3 769.8L1084.5 777.5L1084.7 760.8L1085.0 754.9L1085.2 758.0L1085.5 758.5L1085.7 754.1L1086.0 759.9L1086.2 758.5L1086.5 756.1L1086.7 759.2L1087.0 768.0L1087.2 757.2L1087.4 769.6L1087.7 754.0L1087.9 759.2L1088.2 728.7L1088.4 760.0L1088.7 759.4L1088.9 767.2L1089.2 758.5L1089.4 758.4L1089.6 758.9L1089.9 763.1L1090.1 763.0L1090.4 767.1L1090.6 764.7L1090.9 744.0L1091.1 758.0L1091.4 769.1L1091.6 768.5L1091.8 758.6L1092.1 754.6L1092.3 759.4L1092.6 756.6L1092.8 762.6L1093.1 774.8L1093.3 769.2L1093.6 766.6L1093.8 768.9L1094.1 751.2L1094.3 765.5L1094.5 751.8L1094.8 763.8L1095.0 755.6L1095.3 762.4L1095.5 758.2L1095.8 766.3L1096.0 761.7L1096.3 761.0L1096.5 759.1L1096.8 758.5L1097.0 760.2L1097.2 754.0L1097.5 756.7L1097.7 765.5L1098.0 779.5L1098.2 764.1L1098.5 769.7L1098.7 769.0L1099.0 765.7L1099.2 765.5L1099.4 766.0L1099.7 751.0L1099.9 766.2L1100.2 758.5L1100.4 767.6L1100.7 755.2L1100.9 755.8L1101.2 768.4L1101.4 756.9L1101.7 766.1L1101.9 758.9L1102.1 758.2L1102.4 762.4L1102.6 753.6L1102.9 779.0L1103.1 770.5L1103.4 766.8L1103.6 778.8L1103.9 771.7L1104.1 768.2L1104.3 760.4L1104.6 754.8L1104.8 763.7L1105.1 764.9L1105.3 764.2L1105.6 773.3L1105.8 778.9L1106.1 757.0L1106.3 764.2L1106.5 744.3L1106.8 763.1L1107.0 760.8L1107.3 772.6L1107.5 752.9L1107.8 765.9L1108.0 771.2L1108.3 756.6L1108.5 758.8L1108.8 765.4L1109.0 765.9L1109.2 765.7L1109.5 760.6L1109.7 758.5L1110.0 772.5L1110.2 747.8L1110.5 762.8L1110.7 759.8L1111.0 763.0L1111.2 758.4L1111.5 767.2L1111.7 770.6L1111.9 769.5L1112.2 767.2L1112.4 760.3L1112.7 762.5L1112.9 755.3L1113.2 764.5L1113.4 759.0L1113.7 773.2L1113.9 770.9L1114.1 766.9L1114.4 764.4L1114.6 755.9L1114.9 780.1L1115.1 767.7L1115.4 768.6L1115.6 765.0L1115.9 773.3L1116.1 767.0L1116.3 769.9L1116.6 770.6L1116.8 770.1L1117.1 763.6L1117.3 768.0L1117.6 761.7L1117.8 777.9L1118.1 768.4L1118.3 776.7L1118.6 773.2L1118.8 774.6L1119.0 759.5L1119.3 768.2L1119.5 769.6L1119.8 771.3L1120.0 766.3L1120.3 761.9L1120.5 767.1L1120.8 766.3L1121.0 767.5L1121.2 781.1L1121.5 779.4L1121.7 770.9L1122.0 771.7L1122.2 766.7L1122.5 763.3L1122.7 773.3L1123.0 765.2L1123.2 771.3L1123.5 770.2L1123.7 777.5L1123.9 769.3L1124.2 760.4L1124.4 780.3L1124.7 771.0L1124.9 769.0L1125.2 769.4L1125.4 759.5L1125.7 712.1L1125.9 771.2L1126.2 798.7L1126.4 773.1L1126.6 772.8L1126.9 761.9L1127.1 758.8L1127.4 765.6L1127.6 777.1L1127.9 779.9L1128.1 763.9L1128.4 762.8L1128.6 774.8L1128.8 761.0L1129.1 773.5L1129.3 779.8L1129.6 770.1L1129.8 768.0L1130.1 777.8L1130.3 764.2L1130.6 772.8L1130.8 764.9L1131.0 767.7L1131.3 779.5L1131.5 778.8L1131.8 769.1L1132.0 772.8L1132.3 762.8L1132.5 770.7L1132.8 776.5L1133.0 758.8L1133.3 776.0L1133.5 777.0L1133.7 779.7L1134.0 763.0L1134.2 766.1L1134.5 774.7L1134.7 780.3L1135.0 767.9L1135.2 763.1L1135.5 774.4L1135.7 777.7L1136.0 749.9L1136.2 771.2L1136.4 771.6L1136.7 771.5L1136.9 776.0L1137.2 773.7L1137.4 763.8L1137.7 769.3L1137.9 756.0L1138.2 771.6L1138.4 774.5L1138.6 769.0L1138.9 763.2L1139.1 772.5L1139.4 771.3L1139.6 764.0L1139.9 770.5L1140.1 774.1L1140.4 781.1L1140.6 771.4L1140.8 783.7L1141.1 779.8L1141.3 777.2L1141.6 781.3L1141.8 777.5L1142.1 775.4L1142.3 775.6L1142.6 774.2L1142.8 768.6L1143.1 780.2L1143.3 765.2L1143.5 782.1L1143.8 781.8L1144.0 782.1L1144.3 769.6L1144.5 776.3L1144.8 776.7L1145.0 774.9L1145.3 766.2L1145.5 765.6L1145.8 769.5L1146.0 776.1L1146.2 778.7L1146.5 773.6L1146.7 765.9L1147.0 781.5L1147.2 773.2L1147.5 768.3L1147.7 771.9L1148.0 767.6L1148.2 776.0L1148.4 757.6L1148.7 779.0L1148.9 774.7L1149.2 769.6L1149.4 773.2L1149.7 778.9L1149.9 772.6L1150.2 765.3L1150.4 774.9L1150.7 777.6L1150.9 769.6L1151.1 761.1L1151.4 777.1L1151.6 778.1L1151.9 769.8L1152.1 759.2L1152.4 781.0L1152.6 735.1L1152.9 780.2L1153.1 780.3L1153.3 763.6L1153.6 781.1L1153.8 784.5L1154.1 766.3L1154.3 771.1L1154.6 776.5L1154.8 773.2L1155.1 772.9L1155.3 760.2L1155.5 778.5L1155.8 783.0L1156.0 775.2L1156.3 782.1L1156.5 778.8L1156.8 780.8L1157.0 780.5L1157.3 774.6L1157.5 777.7L1157.8 769.9L1158.0 787.0L1158.2 774.5L1158.5 780.7L1158.7 798.7L1159.0 782.0L1159.2 783.1L1159.5 773.5L1159.7 778.0L1160.0 775.5L1160.2 771.1L1160.5 777.9L1160.7 779.7L1160.9 775.6L1161.2 770.4L1161.4 778.0L1161.7 773.5L1161.9 783.7L1162.2 773.7L1162.4 771.6L1162.7 763.8L1162.9 753.5L1163.1 783.0L1163.4 780.8L1163.6 768.6L1163.9 774.0L1164.1 769.0L1164.4 790.2L1164.6 778.0L1164.9 779.0L1165.1 776.3L1165.3 781.7L1165.6 781.7L1165.8 780.2L1166.1 782.4L1166.3 781.2L1166.6 782.4L1166.8 783.6L1167.1 780.5L1167.3 770.5L1167.6 781.8L1167.8 780.9L1168.0 776.4L1168.3 783.1L1168.5 787.2L1168.8 778.2L1169.0 773.4L1169.3 787.8L1169.5 777.5L1169.8 778.5L1170.0 782.0L1170.2 771.3L1170.5 779.8L1170.7 779.7L1171.0 766.5L1171.2 779.7L1171.5 788.2L1171.7 762.7L1172.0 768.3L1172.2 772.1L1172.5 776.7L1172.7 771.4L1172.9 780.0L1173.2 772.4L1173.4 683.9L1173.7 776.8L1173.9 780.6L1174.2 780.7L1174.4 782.9L1174.7 781.1L1174.9 782.9L1175.2 778.2L1175.4 778.2L1175.6 781.5L1175.9 776.9L1176.1 765.4L1176.4 777.4L1176.6 779.8L1176.9 775.1L1177.1 790.2L1177.4 771.8L1177.6 778.2L1177.8 781.8L1178.1 774.2L1178.3 780.2L1178.6 785.3L1178.8 780.8L1179.1 785.0L1179.3 779.1L1179.6 781.1L1179.8 779.9L1180.0 787.7L1180.3 786.1L1180.5 769.6L1180.8 765.0L1181.0 773.1L1181.3 773.0L1181.5 769.8L1181.8 772.6L1182.0 773.2L1182.3 788.8" stroke="#00f" stroke-width="1.65" fill="none" clip-path="url(#c4)" stroke-linejoin="round"/>
<rect x="911.1" y="688.9" width="273.80000000000007" height="119.70000000000005" fill="none" stroke="#000" stroke-width="1.7"/>
<text x="913.60" y="832.0" font-size="9.72" text-anchor="middle">0</text>
<text x="962.60" y="832.0" font-size="9.72" text-anchor="middle">200</text>
<text x="1011.60" y="832.0" font-size="9.72" text-anchor="middle">400</text>
<text x="1060.60" y="832.0" font-size="9.72" text-anchor="middle">600</text>
<text x="1109.60" y="832.0" font-size="9.72" text-anchor="middle">800</text>
<text x="1158.60" y="832.0" font-size="9.72" text-anchor="middle">1000</text>
<text x="895.5" y="802.15" font-size="9.72" text-anchor="end">50</text>
<text x="895.5" y="756.10" font-size="9.72" text-anchor="end">100</text>
<text x="895.5" y="710.05" font-size="9.72" text-anchor="end">150</text>
<path d="M913.00 808.6v7M962.00 808.6v7M1011.00 808.6v7M1060.00 808.6v7M1109.00 808.6v7M1158.00 808.6v7M911.1 797.75h-7M911.1 751.70h-7M911.1 705.65h-7" stroke="#000" stroke-width="1.7" fill="none"/>
<text x="1048" y="849.5" font-size="10.42" text-anchor="middle">Y</text>
<text x="866" y="751" font-size="10.42" text-anchor="middle" transform="rotate(-90 866 751)">counts</text>
<text x="1194" y="749" font-size="10.42" text-anchor="middle" transform="rotate(90 1194 749)">cut in y</text>
<rect x="1108.4" y="691.65" width="73.9" height="16.7" rx="2" fill="#fff" fill-opacity="0.8" stroke="#ccc" stroke-width="1.3"/>
<path d="M1111.2 699.8H1133.7" stroke="#00f" stroke-width="1.6"/>
<text x="1137.3" y="703.3" font-size="9.72" text-anchor="start">x=1024</text>
</svg>
</body></html>
